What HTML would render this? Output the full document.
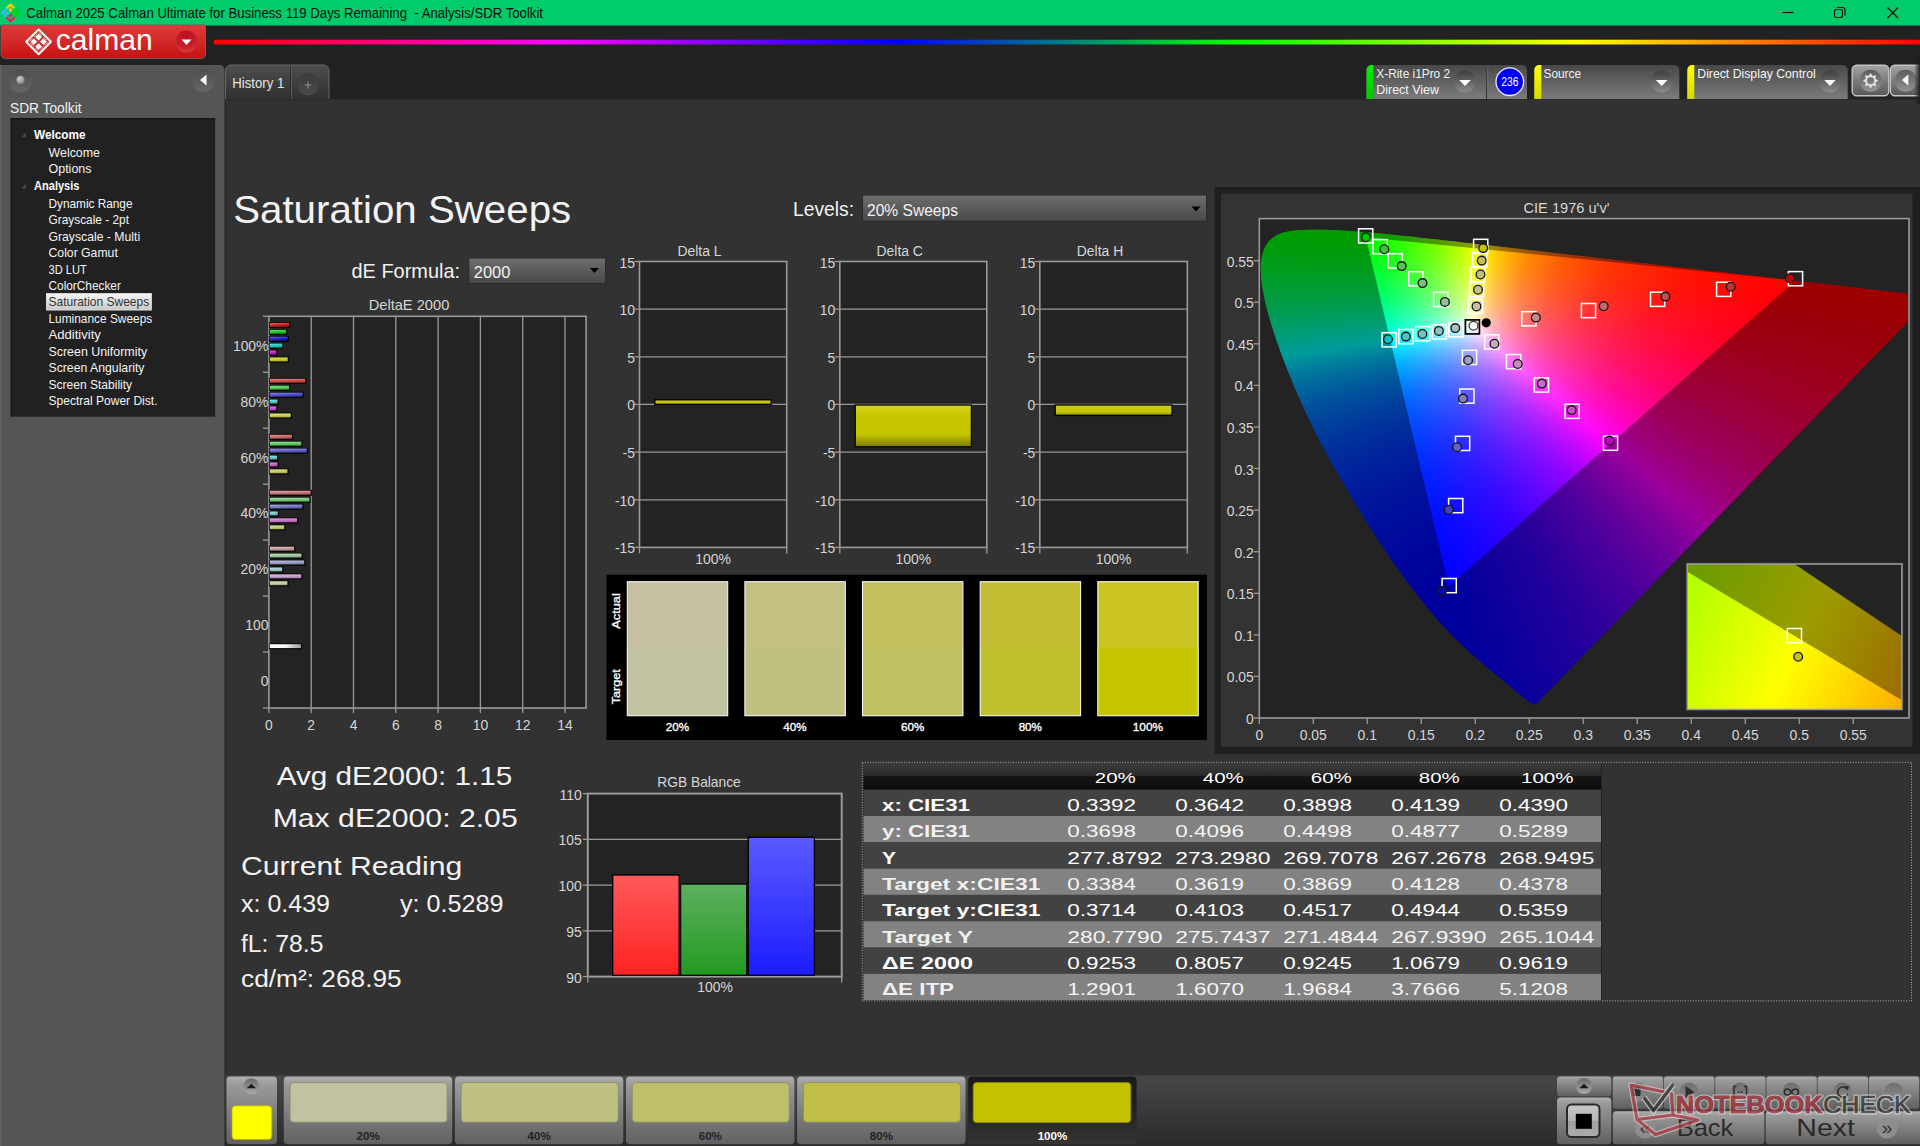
<!DOCTYPE html>
<html><head><meta charset="utf-8"><title>Calman - Saturation Sweeps</title>
<style>
html,body{margin:0;padding:0;background:#222;overflow:hidden}
body{width:1920px;height:1146px;position:relative;font-family:'Liberation Sans', sans-serif}
svg{position:absolute;left:0;top:0;font-family:'Liberation Sans', sans-serif}
svg text{white-space:pre}
#cie i{position:absolute;display:block;height:2px}
</style></head><body>
<svg width="1920" height="1146" viewBox="0 0 1920 1146"><defs>
<linearGradient id="gLogo" x1="0" y1="0" x2="0" y2="1"><stop offset="0" stop-color="#dc3c3c"/><stop offset="0.5" stop-color="#d42828"/><stop offset="1" stop-color="#c41212"/></linearGradient>
<radialGradient id="gLogoBtn" cx="0.5" cy="0.2" r="0.9"><stop offset="0" stop-color="#b80f1e"/><stop offset="0.6" stop-color="#c8202a"/><stop offset="1" stop-color="#de4848"/></radialGradient>
<linearGradient id="gRainbow" x1="0" y1="0" x2="1" y2="0"><stop offset="0" stop-color="#ff0000"/><stop offset="0.2" stop-color="#ff00ff"/><stop offset="0.4" stop-color="#0000ff"/><stop offset="0.6" stop-color="#00ff00"/><stop offset="0.8" stop-color="#ffff00"/><stop offset="1" stop-color="#ff0000"/></linearGradient>
<linearGradient id="gBall" x1="0" y1="0" x2="0" y2="1"><stop offset="0" stop-color="#4e4e4e"/><stop offset="1" stop-color="#666"/></linearGradient>
<radialGradient id="gBall2" cx="0.4" cy="0.35" r="0.7"><stop offset="0" stop-color="#d0d0d0"/><stop offset="1" stop-color="#7a7a7a"/></radialGradient>
<linearGradient id="gShadowV" x1="0" y1="0" x2="0" y2="1"><stop offset="0" stop-color="#111"/><stop offset="1" stop-color="#212121"/></linearGradient>
<linearGradient id="gShadowH" x1="0" y1="0" x2="1" y2="0"><stop offset="0" stop-color="#111"/><stop offset="1" stop-color="#212121" stop-opacity="0"/></linearGradient>
<linearGradient id="gSel" x1="0" y1="0" x2="0" y2="1"><stop offset="0" stop-color="#f6f6f6"/><stop offset="1" stop-color="#c8c8c8"/></linearGradient>
<linearGradient id="gTab" x1="0" y1="0" x2="0" y2="1"><stop offset="0" stop-color="#4e4e4e"/><stop offset="1" stop-color="#303030"/></linearGradient>
<linearGradient id="gPlus" x1="0" y1="0" x2="0" y2="1"><stop offset="0" stop-color="#3a3a3a"/><stop offset="1" stop-color="#4a4a4a"/></linearGradient>
<linearGradient id="gWidget" x1="0" y1="0" x2="0" y2="1"><stop offset="0" stop-color="#484848"/><stop offset="1" stop-color="#7c7c7c"/></linearGradient>
<linearGradient id="gStripeG" x1="0" y1="0" x2="0" y2="1"><stop offset="0" stop-color="#00f000"/><stop offset="1" stop-color="#00c800"/></linearGradient>
<linearGradient id="gStripeY" x1="0" y1="0" x2="0" y2="1"><stop offset="0" stop-color="#ffff00"/><stop offset="1" stop-color="#d8d800"/></linearGradient>
<linearGradient id="gDD" x1="0" y1="0" x2="0" y2="1"><stop offset="0" stop-color="#3e3e3e"/><stop offset="1" stop-color="#8a8a8a"/></linearGradient>
<linearGradient id="gDD4" x1="0" y1="0" x2="0" y2="1"><stop offset="0" stop-color="#5c5c5c"/><stop offset="1" stop-color="#949494"/></linearGradient>
<linearGradient id="gEdge" x1="0" y1="0" x2="1" y2="0"><stop offset="0" stop-color="#222" stop-opacity="0"/><stop offset="1" stop-color="#1a1a1a" stop-opacity="0.95"/></linearGradient>
<linearGradient id="gBtn" x1="0" y1="0" x2="0" y2="1"><stop offset="0" stop-color="#a4a4a4"/><stop offset="0.5" stop-color="#7c7c7c"/><stop offset="1" stop-color="#585858"/></linearGradient>
<linearGradient id="gGloss" x1="0" y1="0" x2="0" y2="1"><stop offset="0" stop-color="#fff" stop-opacity="0.3"/><stop offset="0.45" stop-color="#fff" stop-opacity="0.05"/><stop offset="0.55" stop-color="#000" stop-opacity="0"/><stop offset="1" stop-color="#000" stop-opacity="0.22"/></linearGradient><linearGradient id="gb0" x1="0" y1="0" x2="1" y2="0"><stop offset="0" stop-color="rgb(208,50,50)"/><stop offset="1" stop-color="rgb(200,12,12)"/></linearGradient><linearGradient id="gb1" x1="0" y1="0" x2="1" y2="0"><stop offset="0" stop-color="rgb(50,208,50)"/><stop offset="1" stop-color="rgb(12,200,12)"/></linearGradient><linearGradient id="gb2" x1="0" y1="0" x2="1" y2="0"><stop offset="0" stop-color="rgb(52,52,205)"/><stop offset="1" stop-color="rgb(14,14,196)"/></linearGradient><linearGradient id="gb3" x1="0" y1="0" x2="1" y2="0"><stop offset="0" stop-color="rgb(50,208,208)"/><stop offset="1" stop-color="rgb(12,200,200)"/></linearGradient><linearGradient id="gb4" x1="0" y1="0" x2="1" y2="0"><stop offset="0" stop-color="rgb(208,50,208)"/><stop offset="1" stop-color="rgb(200,12,200)"/></linearGradient><linearGradient id="gb5" x1="0" y1="0" x2="1" y2="0"><stop offset="0" stop-color="rgb(208,208,50)"/><stop offset="1" stop-color="rgb(200,200,12)"/></linearGradient><linearGradient id="gb6" x1="0" y1="0" x2="1" y2="0"><stop offset="0" stop-color="rgb(213,92,92)"/><stop offset="1" stop-color="rgb(205,62,62)"/></linearGradient><linearGradient id="gb7" x1="0" y1="0" x2="1" y2="0"><stop offset="0" stop-color="rgb(92,213,92)"/><stop offset="1" stop-color="rgb(62,205,62)"/></linearGradient><linearGradient id="gb8" x1="0" y1="0" x2="1" y2="0"><stop offset="0" stop-color="rgb(92,92,213)"/><stop offset="1" stop-color="rgb(62,62,205)"/></linearGradient><linearGradient id="gb9" x1="0" y1="0" x2="1" y2="0"><stop offset="0" stop-color="rgb(92,213,213)"/><stop offset="1" stop-color="rgb(62,205,205)"/></linearGradient><linearGradient id="gb10" x1="0" y1="0" x2="1" y2="0"><stop offset="0" stop-color="rgb(213,92,213)"/><stop offset="1" stop-color="rgb(205,62,205)"/></linearGradient><linearGradient id="gb11" x1="0" y1="0" x2="1" y2="0"><stop offset="0" stop-color="rgb(213,213,92)"/><stop offset="1" stop-color="rgb(205,205,62)"/></linearGradient><linearGradient id="gb12" x1="0" y1="0" x2="1" y2="0"><stop offset="0" stop-color="rgb(208,113,113)"/><stop offset="1" stop-color="rgb(200,86,86)"/></linearGradient><linearGradient id="gb13" x1="0" y1="0" x2="1" y2="0"><stop offset="0" stop-color="rgb(113,208,113)"/><stop offset="1" stop-color="rgb(86,200,86)"/></linearGradient><linearGradient id="gb14" x1="0" y1="0" x2="1" y2="0"><stop offset="0" stop-color="rgb(113,113,208)"/><stop offset="1" stop-color="rgb(86,86,200)"/></linearGradient><linearGradient id="gb15" x1="0" y1="0" x2="1" y2="0"><stop offset="0" stop-color="rgb(113,208,208)"/><stop offset="1" stop-color="rgb(86,200,200)"/></linearGradient><linearGradient id="gb16" x1="0" y1="0" x2="1" y2="0"><stop offset="0" stop-color="rgb(208,113,208)"/><stop offset="1" stop-color="rgb(200,86,200)"/></linearGradient><linearGradient id="gb17" x1="0" y1="0" x2="1" y2="0"><stop offset="0" stop-color="rgb(208,208,113)"/><stop offset="1" stop-color="rgb(200,200,86)"/></linearGradient><linearGradient id="gb18" x1="0" y1="0" x2="1" y2="0"><stop offset="0" stop-color="rgb(205,131,131)"/><stop offset="1" stop-color="rgb(196,108,108)"/></linearGradient><linearGradient id="gb19" x1="0" y1="0" x2="1" y2="0"><stop offset="0" stop-color="rgb(131,205,131)"/><stop offset="1" stop-color="rgb(108,196,108)"/></linearGradient><linearGradient id="gb20" x1="0" y1="0" x2="1" y2="0"><stop offset="0" stop-color="rgb(131,131,205)"/><stop offset="1" stop-color="rgb(108,108,196)"/></linearGradient><linearGradient id="gb21" x1="0" y1="0" x2="1" y2="0"><stop offset="0" stop-color="rgb(131,205,205)"/><stop offset="1" stop-color="rgb(108,196,196)"/></linearGradient><linearGradient id="gb22" x1="0" y1="0" x2="1" y2="0"><stop offset="0" stop-color="rgb(205,131,205)"/><stop offset="1" stop-color="rgb(196,108,196)"/></linearGradient><linearGradient id="gb23" x1="0" y1="0" x2="1" y2="0"><stop offset="0" stop-color="rgb(205,205,131)"/><stop offset="1" stop-color="rgb(196,196,108)"/></linearGradient><linearGradient id="gb24" x1="0" y1="0" x2="1" y2="0"><stop offset="0" stop-color="rgb(207,166,166)"/><stop offset="1" stop-color="rgb(198,150,150)"/></linearGradient><linearGradient id="gb25" x1="0" y1="0" x2="1" y2="0"><stop offset="0" stop-color="rgb(166,207,166)"/><stop offset="1" stop-color="rgb(150,198,150)"/></linearGradient><linearGradient id="gb26" x1="0" y1="0" x2="1" y2="0"><stop offset="0" stop-color="rgb(166,166,207)"/><stop offset="1" stop-color="rgb(150,150,198)"/></linearGradient><linearGradient id="gb27" x1="0" y1="0" x2="1" y2="0"><stop offset="0" stop-color="rgb(166,207,207)"/><stop offset="1" stop-color="rgb(150,198,198)"/></linearGradient><linearGradient id="gb28" x1="0" y1="0" x2="1" y2="0"><stop offset="0" stop-color="rgb(207,166,207)"/><stop offset="1" stop-color="rgb(198,150,198)"/></linearGradient><linearGradient id="gb29" x1="0" y1="0" x2="1" y2="0"><stop offset="0" stop-color="rgb(207,207,166)"/><stop offset="1" stop-color="rgb(198,198,150)"/></linearGradient><linearGradient id="gbw" x1="0" y1="0" x2="1" y2="0"><stop offset="0" stop-color="#fff"/><stop offset="0.5" stop-color="#f4f4f4"/><stop offset="1" stop-color="#9c9c9c"/></linearGradient><linearGradient id="gYel" x1="0" y1="0" x2="0" y2="1"><stop offset="0" stop-color="#d6d628"/><stop offset="0.25" stop-color="#c8c800"/><stop offset="0.7" stop-color="#c4c400"/><stop offset="1" stop-color="#7c7c00"/></linearGradient><linearGradient id="gR" x1="0" y1="0" x2="0" y2="1"><stop offset="0" stop-color="#ff5a5a"/><stop offset="1" stop-color="#ff2222"/></linearGradient><linearGradient id="gG" x1="0" y1="0" x2="0" y2="1"><stop offset="0" stop-color="#5eb05e"/><stop offset="1" stop-color="#229a22"/></linearGradient><linearGradient id="gB" x1="0" y1="0" x2="0" y2="1"><stop offset="0" stop-color="#5a5aff"/><stop offset="1" stop-color="#1c1cff"/></linearGradient><linearGradient id="gCombo" x1="0" y1="0" x2="0" y2="1"><stop offset="0" stop-color="#6e6e6e"/><stop offset="1" stop-color="#484848"/></linearGradient><linearGradient id="gTh" x1="0" y1="0" x2="0" y2="1"><stop offset="0" stop-color="#3c3c3c"/><stop offset="0.45" stop-color="#2a2a2a"/><stop offset="0.5" stop-color="#151515"/><stop offset="1" stop-color="#0c0c0c"/></linearGradient><linearGradient id="gBot" x1="0" y1="0" x2="0" y2="1"><stop offset="0" stop-color="#484848"/><stop offset="1" stop-color="#2a2a2a"/></linearGradient><linearGradient id="gBB" x1="0" y1="0" x2="0" y2="1"><stop offset="0" stop-color="#b0b0b0"/><stop offset="0.12" stop-color="#9a9a9a"/><stop offset="1" stop-color="#606060"/></linearGradient><linearGradient id="gSelB" gradientUnits="userSpaceOnUse" x1="0" y1="1076" x2="0" y2="1146"><stop offset="0" stop-color="#1a1a1a"/><stop offset="0.5" stop-color="#222"/><stop offset="1" stop-color="#363636"/></linearGradient><linearGradient id="gStop" x1="0" y1="0" x2="0" y2="1"><stop offset="0" stop-color="#c8c8c8"/><stop offset="0.5" stop-color="#b4b4b4"/><stop offset="0.52" stop-color="#a0a0a0"/><stop offset="1" stop-color="#acacac"/></linearGradient><linearGradient id="gDD3" x1="0" y1="0" x2="0" y2="1"><stop offset="0" stop-color="#6e6e6e"/><stop offset="1" stop-color="#8c8c8c"/></linearGradient><linearGradient id="gDD2" x1="0" y1="0" x2="0" y2="1"><stop offset="0" stop-color="#6a6a6a"/><stop offset="1" stop-color="#aaa"/></linearGradient></defs>
<rect x="0.0" y="0.0" width="1920.0" height="25.5" fill="#00cc6b"/>
<path d="M7,7.9 L10.5,4.5 L14,7.9" fill="none" stroke="#ffc800" stroke-width="2.3" stroke-linecap="round" stroke-linejoin="round"/>
<path d="M10.5,7.800000000000001 L12.6,9.9 L10.5,12.0 L8.4,9.9Z" fill="#ffc800"/>
<path d="M5.8,9.2 L2.5,12.8 L5.8,16.4" fill="none" stroke="#33c0ff" stroke-width="2.3" stroke-linecap="round" stroke-linejoin="round"/>
<path d="M7.3,10.700000000000001 L9.4,12.8 L7.3,14.9 L5.199999999999999,12.8Z" fill="#33c0ff"/>
<path d="M15.2,9.2 L18.5,12.8 L15.2,16.4" fill="none" stroke="#00d800" stroke-width="2.3" stroke-linecap="round" stroke-linejoin="round"/>
<path d="M13.7,10.700000000000001 L15.799999999999999,12.8 L13.7,14.9 L11.6,12.8Z" fill="#00d800"/>
<path d="M7,17.7 L10.5,21.1 L14,17.7" fill="none" stroke="#ff1060" stroke-width="2.3" stroke-linecap="round" stroke-linejoin="round"/>
<path d="M10.5,13.6 L12.6,15.7 L10.5,17.8 L8.4,15.7Z" fill="#ff1060"/>
<text x="26.3" y="17.6" font-size="14.3" fill="#0a0a0a" textLength="516.7" lengthAdjust="spacingAndGlyphs" xml:space="preserve">Calman 2025 Calman Ultimate for Business 119 Days Remaining  - Analysis/SDR Toolkit</text>
<line x1="1782.5" y1="12.5" x2="1793.5" y2="12.5" stroke="#111" stroke-width="1.2"/>
<rect x="1834.5" y="9.5" width="8" height="8" rx="2" fill="none" stroke="#111" stroke-width="1.2"/>
<path d="M1837,7.5 h5.5 a2.5,2.5 0 0 1 2.5,2.5 v5.5" fill="none" stroke="#111" stroke-width="1.2"/>
<path d="M1887.5,7.5 L1898,18 M1898,7.5 L1887.5,18" stroke="#111" stroke-width="1.3" fill="none"/>
<path d="M1,25 H205.5 V54 a4.5,4.5 0 0 1 -4.5,4.5 H5.5 a4.5,4.5 0 0 1 -4.5,-4.5Z" fill="url(#gLogo)" stroke="#7a5a5a" stroke-width="1"/>
<path d="M38.60,29.40 L51.00,41.80 L38.60,54.20 L26.20,41.80Z" fill="none" stroke="#fff" stroke-width="2" stroke-linejoin="round"/>
<path d="M38.60,33.80 L41.90,37.10 L38.60,40.40 L35.30,37.10Z M33.90,38.50 L37.20,41.80 L33.90,45.10 L30.60,41.80Z M43.30,38.50 L46.60,41.80 L43.30,45.10 L40.00,41.80Z M38.60,43.20 L41.90,46.50 L38.60,49.80 L35.30,46.50Z" fill="#fff"/>
<path d="M29.3,41.8 L38.6,32.5 L47.900000000000006,41.8 L38.6,51.099999999999994Z" fill="none" stroke="#fff" stroke-width="1" stroke-opacity="0.75" stroke-dasharray="4.6 2"/>
<text x="55.7" y="50.1" font-size="29.5" fill="#fff" textLength="97.0" lengthAdjust="spacingAndGlyphs">calman</text>
<circle cx="186.5" cy="41.5" r="11" fill="url(#gLogoBtn)"/>
<path d="M181.5,39.5 h10 l-5,5.5Z" fill="#fff"/>
<rect x="214.0" y="39.7" width="1706.0" height="4.8" fill="url(#gRainbow)"/>
<path d="M0,65 H219.5 a5,5 0 0 1 5,5 V1146 H0Z" fill="#555"/>
<rect x="0.0" y="65.0" width="1.5" height="1081.0" fill="#626262"/>
<circle cx="20.5" cy="81" r="11.5" fill="url(#gBall)"/>
<circle cx="20.5" cy="80" r="4.2" fill="url(#gBall2)"/>
<circle cx="203.5" cy="80.5" r="11.5" fill="url(#gBall)"/>
<path d="M206.5,74.5 v11 l-6.5,-5.5Z" fill="#fff"/>
<text x="10.0" y="113.3" font-size="14.6" fill="#f0f0f0" textLength="71.5" lengthAdjust="spacingAndGlyphs">SDR Toolkit</text>
<rect x="10.7" y="118.0" width="204.5" height="298.7" fill="#212121"/>
<rect x="10.7" y="118.0" width="204.5" height="2.5" fill="url(#gShadowV)"/>
<rect x="10.7" y="118.0" width="2.5" height="298.7" fill="url(#gShadowH)"/>
<text x="34.0" y="138.5" font-size="12.6" fill="#fff" textLength="51.5" lengthAdjust="spacingAndGlyphs" font-weight="bold">Welcome</text>
<path d="M25.8,132.7 v4.6 h-4.6Z" fill="#4a4a4a"/>
<text x="48.5" y="156.6" font-size="12.6" fill="#f4f4f4" textLength="51.5" lengthAdjust="spacingAndGlyphs">Welcome</text>
<text x="48.5" y="173.1" font-size="12.6" fill="#f4f4f4" textLength="43.0" lengthAdjust="spacingAndGlyphs">Options</text>
<text x="34.0" y="189.6" font-size="12.6" fill="#fff" textLength="45.5" lengthAdjust="spacingAndGlyphs" font-weight="bold">Analysis</text>
<path d="M25.8,183.79999999999998 v4.6 h-4.6Z" fill="#4a4a4a"/>
<text x="48.5" y="207.6" font-size="12.6" fill="#f4f4f4" textLength="84.0" lengthAdjust="spacingAndGlyphs">Dynamic Range</text>
<text x="48.5" y="224.1" font-size="12.6" fill="#f4f4f4" textLength="80.5" lengthAdjust="spacingAndGlyphs">Grayscale - 2pt</text>
<text x="48.5" y="240.6" font-size="12.6" fill="#f4f4f4" textLength="91.6" lengthAdjust="spacingAndGlyphs">Grayscale - Multi</text>
<text x="48.5" y="257.1" font-size="12.6" fill="#f4f4f4" textLength="69.3" lengthAdjust="spacingAndGlyphs">Color Gamut</text>
<text x="48.5" y="273.5" font-size="12.6" fill="#f4f4f4" textLength="38.2" lengthAdjust="spacingAndGlyphs">3D LUT</text>
<text x="48.5" y="290.0" font-size="12.6" fill="#f4f4f4" textLength="72.4" lengthAdjust="spacingAndGlyphs">ColorChecker</text>
<rect x="46.3" y="293.5" width="105.2" height="16.6" fill="url(#gSel)" stroke="#fff" stroke-width="0.6"/>
<text x="48.5" y="306.4" font-size="12.6" fill="#333" textLength="100.7" lengthAdjust="spacingAndGlyphs">Saturation Sweeps</text>
<text x="48.5" y="322.9" font-size="12.6" fill="#f4f4f4" textLength="103.7" lengthAdjust="spacingAndGlyphs">Luminance Sweeps</text>
<text x="48.5" y="339.3" font-size="12.6" fill="#f4f4f4" textLength="52.4" lengthAdjust="spacingAndGlyphs">Additivity</text>
<text x="48.5" y="355.8" font-size="12.6" fill="#f4f4f4" textLength="98.6" lengthAdjust="spacingAndGlyphs">Screen Uniformity</text>
<text x="48.5" y="372.2" font-size="12.6" fill="#f4f4f4" textLength="96.0" lengthAdjust="spacingAndGlyphs">Screen Angularity</text>
<text x="48.5" y="388.6" font-size="12.6" fill="#f4f4f4" textLength="83.6" lengthAdjust="spacingAndGlyphs">Screen Stability</text>
<text x="48.5" y="405.0" font-size="12.6" fill="#f4f4f4" textLength="109.0" lengthAdjust="spacingAndGlyphs">Spectral Power Dist.</text>
<rect x="225.5" y="99.5" width="1695.0" height="1047.0" fill="#323232"/>
<path d="M225.5,99.5 V70.5 a5.5,5.5 0 0 1 5.5,-5.5 H323.5 a5.5,5.5 0 0 1 5.5,5.5 V99.5Z" fill="url(#gTab)" stroke="#666" stroke-width="1"/>
<line x1="225.0" y1="99.6" x2="330.0" y2="99.6" stroke="#2a2a2a" stroke-width="1.2"/>
<line x1="290.5" y1="66.0" x2="290.5" y2="99.0" stroke="#2a2a2a" stroke-width="1"/>
<line x1="291.5" y1="66.0" x2="291.5" y2="99.0" stroke="#5a5a5a" stroke-width="1"/>
<text x="232.3" y="88.0" font-size="14.8" fill="#e4e4e4" textLength="52.0" lengthAdjust="spacingAndGlyphs">History 1</text>
<circle cx="308" cy="84.3" r="11" fill="url(#gPlus)"/>
<path d="M304.5,85 h7 M308,81.5 v7" stroke="#999" stroke-width="0.9"/>
<path d="M1366.5,99 V70 a5,5 0 0 1 5,-5 H1522 a5,5 0 0 1 5,5 V99Z" fill="url(#gWidget)"/><path d="M1366.5,99 V70 a5,5 0 0 1 5,-5 H1373.5 V99Z" fill="url(#gStripeG)"/>
<text x="1376.3" y="77.9" font-size="12.6" fill="#f4f4f4" textLength="73.8" lengthAdjust="spacingAndGlyphs">X-Rite i1Pro 2</text>
<text x="1376.3" y="94.4" font-size="12.6" fill="#f4f4f4" textLength="62.7" lengthAdjust="spacingAndGlyphs">Direct View</text>
<circle cx="1465" cy="81.5" r="11" fill="url(#gDD)"/><path d="M1459.2,80.0 h11.6 l-5.8,6Z" fill="#fff"/>
<line x1="1486.6" y1="68.0" x2="1486.6" y2="99.0" stroke="#3c3c3c" stroke-width="1.2"/>
<line x1="1487.8" y1="68.0" x2="1487.8" y2="99.0" stroke="#777" stroke-width="0.8"/>
<circle cx="1509.8" cy="81.7" r="13.8" fill="#0000f0" stroke="#e8e8ff" stroke-width="1.3"/>
<text x="1509.8" y="86.3" font-size="12.4" fill="#fff" textLength="17.2" lengthAdjust="spacingAndGlyphs" text-anchor="middle">236</text>
<path d="M1534.3,99 V70 a5,5 0 0 1 5,-5 H1674.3 a5,5 0 0 1 5,5 V99Z" fill="url(#gWidget)"/><path d="M1534.3,99 V70 a5,5 0 0 1 5,-5 H1541.3 V99Z" fill="url(#gStripeY)"/>
<text x="1543.5" y="77.9" font-size="12.6" fill="#f4f4f4" textLength="37.5" lengthAdjust="spacingAndGlyphs">Source</text>
<circle cx="1661.7" cy="81.5" r="11" fill="url(#gDD)"/><path d="M1655.9,80.0 h11.6 l-5.8,6Z" fill="#fff"/>
<path d="M1687.3,99 V70 a5,5 0 0 1 5,-5 H1842.7 a5,5 0 0 1 5,5 V99Z" fill="url(#gWidget)"/><path d="M1687.3,99 V70 a5,5 0 0 1 5,-5 H1694.3 V99Z" fill="url(#gStripeY)"/>
<text x="1697.3" y="77.9" font-size="12.6" fill="#f4f4f4" textLength="118.4" lengthAdjust="spacingAndGlyphs">Direct Display Control</text>
<circle cx="1830" cy="81.5" r="11" fill="url(#gDD)"/><path d="M1824.2,80.0 h11.6 l-5.8,6Z" fill="#fff"/>
<rect x="1852.2" y="65.3" width="36.6" height="30.4" rx="4.5" fill="url(#gBtn)" stroke="#c4c4c4" stroke-width="1.4"/>
<rect x="1890.4" y="65.3" width="40" height="30.4" rx="4.5" fill="url(#gBtn)" stroke="#c4c4c4" stroke-width="1.4"/>
<circle cx="1870.6" cy="80.7" r="11" fill="url(#gDD4)"/>
<path d="M1870.60,73.20 L1872.51,76.08 L1875.90,75.40 L1875.22,78.79 L1878.10,80.70 L1875.22,82.61 L1875.90,86.00 L1872.51,85.32 L1870.60,88.20 L1868.69,85.32 L1865.30,86.00 L1865.98,82.61 L1863.10,80.70 L1865.98,78.79 L1865.30,75.40 L1868.69,76.08Z M1874.4,80.7 a3.8,3.8 0 1 0 -7.6,0 a3.8,3.8 0 1 0 7.6,0Z" fill="#e6e6e6" fill-rule="evenodd" stroke="#e6e6e6" stroke-width="0.3" stroke-linejoin="round"/>
<circle cx="1905.6" cy="80.7" r="11" fill="url(#gDD4)"/>
<path d="M1908.3,74.5 v11 l-6.3,-5.5Z" fill="#fff"/>
<rect x="1914.0" y="58.0" width="6.0" height="46.0" fill="url(#gEdge)"/>
<text x="233.2" y="223.3" font-size="39.5" fill="#f2f2f2" textLength="338.0" lengthAdjust="spacingAndGlyphs">Saturation Sweeps</text>
<text x="793.0" y="216.0" font-size="21" fill="#f2f2f2" textLength="61.0" lengthAdjust="spacingAndGlyphs">Levels:</text>
<rect x="862.5" y="195.0" width="344.0" height="26.3" fill="url(#gCombo)" stroke="#2a2a2a" stroke-width="1"/>
<text x="867.0" y="215.8" font-size="16.3" fill="#f2f2f2" textLength="91.0" lengthAdjust="spacingAndGlyphs">20% Sweeps</text>
<path d="M1191.5,206.5 h9 l-4.5,5Z" fill="#000"/>
<text x="351.5" y="278.0" font-size="21" fill="#f2f2f2" textLength="108.5" lengthAdjust="spacingAndGlyphs">dE Formula:</text>
<rect x="468.8" y="258.0" width="136.8" height="25.6" fill="url(#gCombo)" stroke="#2a2a2a" stroke-width="1"/>
<text x="473.8" y="277.8" font-size="16.3" fill="#f2f2f2" textLength="36.5" lengthAdjust="spacingAndGlyphs">2000</text>
<path d="M590,268 h9 l-4.5,5Z" fill="#000"/>
<text x="409.0" y="310.2" font-size="14.5" fill="#d6d6d6" textLength="80.6" lengthAdjust="spacingAndGlyphs" text-anchor="middle">DeltaE 2000</text>
<rect x="268.9" y="316.3" width="317.2" height="391.7" fill="#232323" stroke="#9a9a9a" stroke-width="1.6"/>
<line x1="311.2" y1="316.3" x2="311.2" y2="708.0" stroke="#9a9a9a" stroke-width="1.3"/>
<line x1="353.5" y1="316.3" x2="353.5" y2="708.0" stroke="#9a9a9a" stroke-width="1.3"/>
<line x1="395.8" y1="316.3" x2="395.8" y2="708.0" stroke="#9a9a9a" stroke-width="1.3"/>
<line x1="438.1" y1="316.3" x2="438.1" y2="708.0" stroke="#9a9a9a" stroke-width="1.3"/>
<line x1="480.4" y1="316.3" x2="480.4" y2="708.0" stroke="#9a9a9a" stroke-width="1.3"/>
<line x1="522.7" y1="316.3" x2="522.7" y2="708.0" stroke="#9a9a9a" stroke-width="1.3"/>
<line x1="565.0" y1="316.3" x2="565.0" y2="708.0" stroke="#9a9a9a" stroke-width="1.3"/>
<line x1="268.9" y1="708.0" x2="268.9" y2="713.0" stroke="#9a9a9a" stroke-width="1.3"/>
<text x="268.9" y="730.3" font-size="15.3" fill="#d6d6d6" textLength="7.7" lengthAdjust="spacingAndGlyphs" text-anchor="middle">0</text>
<line x1="311.2" y1="708.0" x2="311.2" y2="713.0" stroke="#9a9a9a" stroke-width="1.3"/>
<text x="311.2" y="730.3" font-size="15.3" fill="#d6d6d6" textLength="7.7" lengthAdjust="spacingAndGlyphs" text-anchor="middle">2</text>
<line x1="353.5" y1="708.0" x2="353.5" y2="713.0" stroke="#9a9a9a" stroke-width="1.3"/>
<text x="353.5" y="730.3" font-size="15.3" fill="#d6d6d6" textLength="7.7" lengthAdjust="spacingAndGlyphs" text-anchor="middle">4</text>
<line x1="395.8" y1="708.0" x2="395.8" y2="713.0" stroke="#9a9a9a" stroke-width="1.3"/>
<text x="395.8" y="730.3" font-size="15.3" fill="#d6d6d6" textLength="7.7" lengthAdjust="spacingAndGlyphs" text-anchor="middle">6</text>
<line x1="438.1" y1="708.0" x2="438.1" y2="713.0" stroke="#9a9a9a" stroke-width="1.3"/>
<text x="438.1" y="730.3" font-size="15.3" fill="#d6d6d6" textLength="7.7" lengthAdjust="spacingAndGlyphs" text-anchor="middle">8</text>
<line x1="480.4" y1="708.0" x2="480.4" y2="713.0" stroke="#9a9a9a" stroke-width="1.3"/>
<text x="480.4" y="730.3" font-size="15.3" fill="#d6d6d6" textLength="15.5" lengthAdjust="spacingAndGlyphs" text-anchor="middle">10</text>
<line x1="522.7" y1="708.0" x2="522.7" y2="713.0" stroke="#9a9a9a" stroke-width="1.3"/>
<text x="522.7" y="730.3" font-size="15.3" fill="#d6d6d6" textLength="15.5" lengthAdjust="spacingAndGlyphs" text-anchor="middle">12</text>
<line x1="565.0" y1="708.0" x2="565.0" y2="713.0" stroke="#9a9a9a" stroke-width="1.3"/>
<text x="565.0" y="730.3" font-size="15.3" fill="#d6d6d6" textLength="15.5" lengthAdjust="spacingAndGlyphs" text-anchor="middle">14</text>
<line x1="262.9" y1="316.3" x2="268.9" y2="316.3" stroke="#9a9a9a" stroke-width="1.3"/>
<text x="268.5" y="350.6" font-size="15.3" fill="#d6d6d6" textLength="35.6" lengthAdjust="spacingAndGlyphs" text-anchor="end">100%</text>
<line x1="262.9" y1="372.3" x2="268.9" y2="372.3" stroke="#9a9a9a" stroke-width="1.3"/>
<text x="268.5" y="406.5" font-size="15.3" fill="#d6d6d6" textLength="27.9" lengthAdjust="spacingAndGlyphs" text-anchor="end">80%</text>
<line x1="262.9" y1="428.2" x2="268.9" y2="428.2" stroke="#9a9a9a" stroke-width="1.3"/>
<text x="268.5" y="462.5" font-size="15.3" fill="#d6d6d6" textLength="27.9" lengthAdjust="spacingAndGlyphs" text-anchor="end">60%</text>
<line x1="262.9" y1="484.2" x2="268.9" y2="484.2" stroke="#9a9a9a" stroke-width="1.3"/>
<text x="268.5" y="518.4" font-size="15.3" fill="#d6d6d6" textLength="27.9" lengthAdjust="spacingAndGlyphs" text-anchor="end">40%</text>
<line x1="262.9" y1="540.1" x2="268.9" y2="540.1" stroke="#9a9a9a" stroke-width="1.3"/>
<text x="268.5" y="574.4" font-size="15.3" fill="#d6d6d6" textLength="27.9" lengthAdjust="spacingAndGlyphs" text-anchor="end">20%</text>
<line x1="262.9" y1="596.1" x2="268.9" y2="596.1" stroke="#9a9a9a" stroke-width="1.3"/>
<text x="268.5" y="630.4" font-size="15.3" fill="#d6d6d6" textLength="23.2" lengthAdjust="spacingAndGlyphs" text-anchor="end">100</text>
<line x1="262.9" y1="652.0" x2="268.9" y2="652.0" stroke="#9a9a9a" stroke-width="1.3"/>
<text x="268.5" y="686.3" font-size="15.3" fill="#d6d6d6" textLength="7.7" lengthAdjust="spacingAndGlyphs" text-anchor="end">0</text>
<line x1="262.9" y1="708.0" x2="268.9" y2="708.0" stroke="#9a9a9a" stroke-width="1.3"/>
<rect x="268.9" y="322.0" width="21.6" height="5.9" fill="#000"/><rect x="269.7" y="322.9" width="19.6" height="3.9" fill="url(#gb0)"/><rect x="269.7" y="322.9" width="19.6" height="3.9" fill="url(#gGloss)"/>
<rect x="268.9" y="328.9" width="18.4" height="5.9" fill="#000"/><rect x="269.7" y="329.8" width="16.4" height="3.9" fill="url(#gb1)"/><rect x="269.7" y="329.8" width="16.4" height="3.9" fill="url(#gGloss)"/>
<rect x="268.9" y="335.9" width="19.9" height="5.9" fill="#000"/><rect x="269.7" y="336.7" width="17.9" height="3.9" fill="url(#gb2)"/><rect x="269.7" y="336.7" width="17.9" height="3.9" fill="url(#gGloss)"/>
<rect x="268.9" y="342.8" width="14.6" height="5.9" fill="#000"/><rect x="269.7" y="343.6" width="12.6" height="3.9" fill="url(#gb3)"/><rect x="269.7" y="343.6" width="12.6" height="3.9" fill="url(#gGloss)"/>
<rect x="268.9" y="349.7" width="8.5" height="5.9" fill="#000"/><rect x="269.7" y="350.6" width="6.5" height="3.9" fill="url(#gb4)"/><rect x="269.7" y="350.6" width="6.5" height="3.9" fill="url(#gGloss)"/>
<rect x="268.9" y="356.7" width="20.0" height="5.9" fill="#000"/><rect x="269.7" y="357.5" width="18.0" height="3.9" fill="url(#gb5)"/><rect x="269.7" y="357.5" width="18.0" height="3.9" fill="url(#gGloss)"/>
<rect x="268.9" y="378.0" width="37.6" height="5.9" fill="#000"/><rect x="269.7" y="378.8" width="35.6" height="3.9" fill="url(#gb6)"/><rect x="269.7" y="378.8" width="35.6" height="3.9" fill="url(#gGloss)"/>
<rect x="268.9" y="384.9" width="21.4" height="5.9" fill="#000"/><rect x="269.7" y="385.7" width="19.4" height="3.9" fill="url(#gb7)"/><rect x="269.7" y="385.7" width="19.4" height="3.9" fill="url(#gGloss)"/>
<rect x="268.9" y="391.8" width="34.9" height="5.9" fill="#000"/><rect x="269.7" y="392.7" width="32.9" height="3.9" fill="url(#gb8)"/><rect x="269.7" y="392.7" width="32.9" height="3.9" fill="url(#gGloss)"/>
<rect x="268.9" y="398.7" width="9.8" height="5.9" fill="#000"/><rect x="269.7" y="399.6" width="7.8" height="3.9" fill="url(#gb9)"/><rect x="269.7" y="399.6" width="7.8" height="3.9" fill="url(#gGloss)"/>
<rect x="268.9" y="405.7" width="8.6" height="5.9" fill="#000"/><rect x="269.7" y="406.5" width="6.6" height="3.9" fill="url(#gb10)"/><rect x="269.7" y="406.5" width="6.6" height="3.9" fill="url(#gGloss)"/>
<rect x="268.9" y="412.6" width="23.0" height="5.9" fill="#000"/><rect x="269.7" y="413.5" width="21.0" height="3.9" fill="url(#gb11)"/><rect x="269.7" y="413.5" width="21.0" height="3.9" fill="url(#gGloss)"/>
<rect x="268.9" y="433.9" width="24.2" height="5.9" fill="#000"/><rect x="269.7" y="434.8" width="22.2" height="3.9" fill="url(#gb12)"/><rect x="269.7" y="434.8" width="22.2" height="3.9" fill="url(#gGloss)"/>
<rect x="268.9" y="440.8" width="33.6" height="5.9" fill="#000"/><rect x="269.7" y="441.7" width="31.6" height="3.9" fill="url(#gb13)"/><rect x="269.7" y="441.7" width="31.6" height="3.9" fill="url(#gGloss)"/>
<rect x="268.9" y="447.8" width="39.2" height="5.9" fill="#000"/><rect x="269.7" y="448.6" width="37.2" height="3.9" fill="url(#gb14)"/><rect x="269.7" y="448.6" width="37.2" height="3.9" fill="url(#gGloss)"/>
<rect x="268.9" y="454.7" width="9.4" height="5.9" fill="#000"/><rect x="269.7" y="455.6" width="7.4" height="3.9" fill="url(#gb15)"/><rect x="269.7" y="455.6" width="7.4" height="3.9" fill="url(#gGloss)"/>
<rect x="268.9" y="461.6" width="9.8" height="5.9" fill="#000"/><rect x="269.7" y="462.5" width="7.8" height="3.9" fill="url(#gb16)"/><rect x="269.7" y="462.5" width="7.8" height="3.9" fill="url(#gGloss)"/>
<rect x="268.9" y="468.6" width="19.7" height="5.9" fill="#000"/><rect x="269.7" y="469.4" width="17.7" height="3.9" fill="url(#gb17)"/><rect x="269.7" y="469.4" width="17.7" height="3.9" fill="url(#gGloss)"/>
<rect x="268.9" y="489.9" width="43.0" height="5.9" fill="#000"/><rect x="269.7" y="490.7" width="41.0" height="3.9" fill="url(#gb18)"/><rect x="269.7" y="490.7" width="41.0" height="3.9" fill="url(#gGloss)"/>
<rect x="268.9" y="496.8" width="41.7" height="5.9" fill="#000"/><rect x="269.7" y="497.7" width="39.7" height="3.9" fill="url(#gb19)"/><rect x="269.7" y="497.7" width="39.7" height="3.9" fill="url(#gGloss)"/>
<rect x="268.9" y="503.7" width="34.6" height="5.9" fill="#000"/><rect x="269.7" y="504.6" width="32.6" height="3.9" fill="url(#gb20)"/><rect x="269.7" y="504.6" width="32.6" height="3.9" fill="url(#gGloss)"/>
<rect x="268.9" y="510.7" width="10.0" height="5.9" fill="#000"/><rect x="269.7" y="511.5" width="8.0" height="3.9" fill="url(#gb21)"/><rect x="269.7" y="511.5" width="8.0" height="3.9" fill="url(#gGloss)"/>
<rect x="268.9" y="517.6" width="29.4" height="5.9" fill="#000"/><rect x="269.7" y="518.4" width="27.4" height="3.9" fill="url(#gb22)"/><rect x="269.7" y="518.4" width="27.4" height="3.9" fill="url(#gGloss)"/>
<rect x="268.9" y="524.5" width="16.6" height="5.9" fill="#000"/><rect x="269.7" y="525.4" width="14.6" height="3.9" fill="url(#gb23)"/><rect x="269.7" y="525.4" width="14.6" height="3.9" fill="url(#gGloss)"/>
<rect x="268.9" y="545.8" width="26.4" height="5.9" fill="#000"/><rect x="269.7" y="546.7" width="24.4" height="3.9" fill="url(#gb24)"/><rect x="269.7" y="546.7" width="24.4" height="3.9" fill="url(#gGloss)"/>
<rect x="268.9" y="552.8" width="33.8" height="5.9" fill="#000"/><rect x="269.7" y="553.6" width="31.8" height="3.9" fill="url(#gb25)"/><rect x="269.7" y="553.6" width="31.8" height="3.9" fill="url(#gGloss)"/>
<rect x="268.9" y="559.7" width="36.5" height="5.9" fill="#000"/><rect x="269.7" y="560.5" width="34.5" height="3.9" fill="url(#gb26)"/><rect x="269.7" y="560.5" width="34.5" height="3.9" fill="url(#gGloss)"/>
<rect x="268.9" y="566.6" width="14.5" height="5.9" fill="#000"/><rect x="269.7" y="567.5" width="12.5" height="3.9" fill="url(#gb27)"/><rect x="269.7" y="567.5" width="12.5" height="3.9" fill="url(#gGloss)"/>
<rect x="268.9" y="573.5" width="33.6" height="5.9" fill="#000"/><rect x="269.7" y="574.4" width="31.6" height="3.9" fill="url(#gb28)"/><rect x="269.7" y="574.4" width="31.6" height="3.9" fill="url(#gGloss)"/>
<rect x="268.9" y="580.5" width="19.7" height="5.9" fill="#000"/><rect x="269.7" y="581.3" width="17.7" height="3.9" fill="url(#gb29)"/><rect x="269.7" y="581.3" width="17.7" height="3.9" fill="url(#gGloss)"/>
<rect x="268.9" y="643.4" width="33.2" height="5.9" fill="#000"/>
<rect x="269.7" y="644.2" width="31.2" height="3.9" fill="url(#gbw)"/>
<rect x="639.5" y="261.5" width="147.2" height="285.9" fill="#232323" stroke="#9a9a9a" stroke-width="1.6"/>
<line x1="639.5" y1="309.1" x2="786.7" y2="309.1" stroke="#9a9a9a" stroke-width="1.3"/>
<line x1="639.5" y1="356.8" x2="786.7" y2="356.8" stroke="#9a9a9a" stroke-width="1.3"/>
<line x1="639.5" y1="404.4" x2="786.7" y2="404.4" stroke="#9a9a9a" stroke-width="1.3"/>
<line x1="639.5" y1="452.1" x2="786.7" y2="452.1" stroke="#9a9a9a" stroke-width="1.3"/>
<line x1="639.5" y1="499.8" x2="786.7" y2="499.8" stroke="#9a9a9a" stroke-width="1.3"/>
<line x1="634.5" y1="261.5" x2="639.5" y2="261.5" stroke="#9a9a9a" stroke-width="1.3"/>
<text x="635.0" y="267.5" font-size="15.3" fill="#d6d6d6" textLength="15.5" lengthAdjust="spacingAndGlyphs" text-anchor="end">15</text>
<line x1="634.5" y1="309.1" x2="639.5" y2="309.1" stroke="#9a9a9a" stroke-width="1.3"/>
<text x="635.0" y="315.1" font-size="15.3" fill="#d6d6d6" textLength="15.5" lengthAdjust="spacingAndGlyphs" text-anchor="end">10</text>
<line x1="634.5" y1="356.8" x2="639.5" y2="356.8" stroke="#9a9a9a" stroke-width="1.3"/>
<text x="635.0" y="362.8" font-size="15.3" fill="#d6d6d6" textLength="7.7" lengthAdjust="spacingAndGlyphs" text-anchor="end">5</text>
<line x1="634.5" y1="404.4" x2="639.5" y2="404.4" stroke="#9a9a9a" stroke-width="1.3"/>
<text x="635.0" y="410.4" font-size="15.3" fill="#d6d6d6" textLength="7.7" lengthAdjust="spacingAndGlyphs" text-anchor="end">0</text>
<line x1="634.5" y1="452.1" x2="639.5" y2="452.1" stroke="#9a9a9a" stroke-width="1.3"/>
<text x="635.0" y="458.1" font-size="15.3" fill="#d6d6d6" textLength="12.4" lengthAdjust="spacingAndGlyphs" text-anchor="end">-5</text>
<line x1="634.5" y1="499.8" x2="639.5" y2="499.8" stroke="#9a9a9a" stroke-width="1.3"/>
<text x="635.0" y="505.8" font-size="15.3" fill="#d6d6d6" textLength="20.1" lengthAdjust="spacingAndGlyphs" text-anchor="end">-10</text>
<line x1="634.5" y1="547.4" x2="639.5" y2="547.4" stroke="#9a9a9a" stroke-width="1.3"/>
<text x="635.0" y="553.4" font-size="15.3" fill="#d6d6d6" textLength="20.1" lengthAdjust="spacingAndGlyphs" text-anchor="end">-15</text>
<line x1="639.5" y1="547.4" x2="639.5" y2="553.4" stroke="#9a9a9a" stroke-width="1.3"/>
<line x1="786.7" y1="547.4" x2="786.7" y2="553.4" stroke="#9a9a9a" stroke-width="1.3"/>
<text x="699.5" y="256.0" font-size="15.3" fill="#d6d6d6" textLength="44.1" lengthAdjust="spacingAndGlyphs" text-anchor="middle">Delta L</text>
<text x="713.1" y="564.3" font-size="15.3" fill="#d6d6d6" textLength="35.6" lengthAdjust="spacingAndGlyphs" text-anchor="middle">100%</text>
<rect x="654.8" y="399.8" width="116.4" height="4.6" fill="url(#gYel)" stroke="#000" stroke-width="1.3"/>
<rect x="839.8" y="261.5" width="147.0" height="285.9" fill="#232323" stroke="#9a9a9a" stroke-width="1.6"/>
<line x1="839.8" y1="309.1" x2="986.8" y2="309.1" stroke="#9a9a9a" stroke-width="1.3"/>
<line x1="839.8" y1="356.8" x2="986.8" y2="356.8" stroke="#9a9a9a" stroke-width="1.3"/>
<line x1="839.8" y1="404.4" x2="986.8" y2="404.4" stroke="#9a9a9a" stroke-width="1.3"/>
<line x1="839.8" y1="452.1" x2="986.8" y2="452.1" stroke="#9a9a9a" stroke-width="1.3"/>
<line x1="839.8" y1="499.8" x2="986.8" y2="499.8" stroke="#9a9a9a" stroke-width="1.3"/>
<line x1="834.8" y1="261.5" x2="839.8" y2="261.5" stroke="#9a9a9a" stroke-width="1.3"/>
<text x="835.3" y="267.5" font-size="15.3" fill="#d6d6d6" textLength="15.5" lengthAdjust="spacingAndGlyphs" text-anchor="end">15</text>
<line x1="834.8" y1="309.1" x2="839.8" y2="309.1" stroke="#9a9a9a" stroke-width="1.3"/>
<text x="835.3" y="315.1" font-size="15.3" fill="#d6d6d6" textLength="15.5" lengthAdjust="spacingAndGlyphs" text-anchor="end">10</text>
<line x1="834.8" y1="356.8" x2="839.8" y2="356.8" stroke="#9a9a9a" stroke-width="1.3"/>
<text x="835.3" y="362.8" font-size="15.3" fill="#d6d6d6" textLength="7.7" lengthAdjust="spacingAndGlyphs" text-anchor="end">5</text>
<line x1="834.8" y1="404.4" x2="839.8" y2="404.4" stroke="#9a9a9a" stroke-width="1.3"/>
<text x="835.3" y="410.4" font-size="15.3" fill="#d6d6d6" textLength="7.7" lengthAdjust="spacingAndGlyphs" text-anchor="end">0</text>
<line x1="834.8" y1="452.1" x2="839.8" y2="452.1" stroke="#9a9a9a" stroke-width="1.3"/>
<text x="835.3" y="458.1" font-size="15.3" fill="#d6d6d6" textLength="12.4" lengthAdjust="spacingAndGlyphs" text-anchor="end">-5</text>
<line x1="834.8" y1="499.8" x2="839.8" y2="499.8" stroke="#9a9a9a" stroke-width="1.3"/>
<text x="835.3" y="505.8" font-size="15.3" fill="#d6d6d6" textLength="20.1" lengthAdjust="spacingAndGlyphs" text-anchor="end">-10</text>
<line x1="834.8" y1="547.4" x2="839.8" y2="547.4" stroke="#9a9a9a" stroke-width="1.3"/>
<text x="835.3" y="553.4" font-size="15.3" fill="#d6d6d6" textLength="20.1" lengthAdjust="spacingAndGlyphs" text-anchor="end">-15</text>
<line x1="839.8" y1="547.4" x2="839.8" y2="553.4" stroke="#9a9a9a" stroke-width="1.3"/>
<line x1="986.8" y1="547.4" x2="986.8" y2="553.4" stroke="#9a9a9a" stroke-width="1.3"/>
<text x="899.7" y="256.0" font-size="15.3" fill="#d6d6d6" textLength="46.4" lengthAdjust="spacingAndGlyphs" text-anchor="middle">Delta C</text>
<text x="913.3" y="564.3" font-size="15.3" fill="#d6d6d6" textLength="35.6" lengthAdjust="spacingAndGlyphs" text-anchor="middle">100%</text>
<rect x="855.2" y="405" width="116.2" height="41.8" fill="url(#gYel)" stroke="#000" stroke-width="1.3"/>
<rect x="1039.8" y="261.5" width="147.5" height="285.9" fill="#232323" stroke="#9a9a9a" stroke-width="1.6"/>
<line x1="1039.8" y1="309.1" x2="1187.3" y2="309.1" stroke="#9a9a9a" stroke-width="1.3"/>
<line x1="1039.8" y1="356.8" x2="1187.3" y2="356.8" stroke="#9a9a9a" stroke-width="1.3"/>
<line x1="1039.8" y1="404.4" x2="1187.3" y2="404.4" stroke="#9a9a9a" stroke-width="1.3"/>
<line x1="1039.8" y1="452.1" x2="1187.3" y2="452.1" stroke="#9a9a9a" stroke-width="1.3"/>
<line x1="1039.8" y1="499.8" x2="1187.3" y2="499.8" stroke="#9a9a9a" stroke-width="1.3"/>
<line x1="1034.8" y1="261.5" x2="1039.8" y2="261.5" stroke="#9a9a9a" stroke-width="1.3"/>
<text x="1035.3" y="267.5" font-size="15.3" fill="#d6d6d6" textLength="15.5" lengthAdjust="spacingAndGlyphs" text-anchor="end">15</text>
<line x1="1034.8" y1="309.1" x2="1039.8" y2="309.1" stroke="#9a9a9a" stroke-width="1.3"/>
<text x="1035.3" y="315.1" font-size="15.3" fill="#d6d6d6" textLength="15.5" lengthAdjust="spacingAndGlyphs" text-anchor="end">10</text>
<line x1="1034.8" y1="356.8" x2="1039.8" y2="356.8" stroke="#9a9a9a" stroke-width="1.3"/>
<text x="1035.3" y="362.8" font-size="15.3" fill="#d6d6d6" textLength="7.7" lengthAdjust="spacingAndGlyphs" text-anchor="end">5</text>
<line x1="1034.8" y1="404.4" x2="1039.8" y2="404.4" stroke="#9a9a9a" stroke-width="1.3"/>
<text x="1035.3" y="410.4" font-size="15.3" fill="#d6d6d6" textLength="7.7" lengthAdjust="spacingAndGlyphs" text-anchor="end">0</text>
<line x1="1034.8" y1="452.1" x2="1039.8" y2="452.1" stroke="#9a9a9a" stroke-width="1.3"/>
<text x="1035.3" y="458.1" font-size="15.3" fill="#d6d6d6" textLength="12.4" lengthAdjust="spacingAndGlyphs" text-anchor="end">-5</text>
<line x1="1034.8" y1="499.8" x2="1039.8" y2="499.8" stroke="#9a9a9a" stroke-width="1.3"/>
<text x="1035.3" y="505.8" font-size="15.3" fill="#d6d6d6" textLength="20.1" lengthAdjust="spacingAndGlyphs" text-anchor="end">-10</text>
<line x1="1034.8" y1="547.4" x2="1039.8" y2="547.4" stroke="#9a9a9a" stroke-width="1.3"/>
<text x="1035.3" y="553.4" font-size="15.3" fill="#d6d6d6" textLength="20.1" lengthAdjust="spacingAndGlyphs" text-anchor="end">-15</text>
<line x1="1039.8" y1="547.4" x2="1039.8" y2="553.4" stroke="#9a9a9a" stroke-width="1.3"/>
<line x1="1187.3" y1="547.4" x2="1187.3" y2="553.4" stroke="#9a9a9a" stroke-width="1.3"/>
<text x="1100.0" y="256.0" font-size="15.3" fill="#d6d6d6" textLength="46.4" lengthAdjust="spacingAndGlyphs" text-anchor="middle">Delta H</text>
<text x="1113.5" y="564.3" font-size="15.3" fill="#d6d6d6" textLength="35.6" lengthAdjust="spacingAndGlyphs" text-anchor="middle">100%</text>
<rect x="1055.2" y="405" width="116.8" height="10.4" fill="url(#gYel)" stroke="#000" stroke-width="1.3"/>
<rect x="606.5" y="574.7" width="600.5" height="165.3" fill="#000"/>
<rect x="627.3" y="581.7" width="100.4" height="134.0" fill="#c5c1a0"/>
<rect x="627.3" y="648.4" width="100.4" height="67.3" fill="#c0c2a0"/>
<rect x="627.3" y="581.7" width="100.4" height="134" fill="none" stroke="#f4f4f4" stroke-width="1.1"/>
<text x="677.4" y="731.3" font-size="11.5" fill="#fff" textLength="23.3" lengthAdjust="spacingAndGlyphs" text-anchor="middle" stroke="#fff" stroke-width="0.35">20%</text>
<rect x="744.9" y="581.7" width="100.4" height="134.0" fill="#c4c081"/>
<rect x="744.9" y="648.4" width="100.4" height="67.3" fill="#c0c081"/>
<rect x="744.9" y="581.7" width="100.4" height="134" fill="none" stroke="#f4f4f4" stroke-width="1.1"/>
<text x="795.0" y="731.3" font-size="11.5" fill="#fff" textLength="23.3" lengthAdjust="spacingAndGlyphs" text-anchor="middle" stroke="#fff" stroke-width="0.35">40%</text>
<rect x="862.5" y="581.7" width="100.4" height="134.0" fill="#c4c060"/>
<rect x="862.5" y="648.4" width="100.4" height="67.3" fill="#c1c060"/>
<rect x="862.5" y="581.7" width="100.4" height="134" fill="none" stroke="#f4f4f4" stroke-width="1.1"/>
<text x="912.6" y="731.3" font-size="11.5" fill="#fff" textLength="23.3" lengthAdjust="spacingAndGlyphs" text-anchor="middle" stroke="#fff" stroke-width="0.35">60%</text>
<rect x="980.2" y="581.7" width="100.4" height="134.0" fill="#c6be32"/>
<rect x="980.2" y="648.4" width="100.4" height="67.3" fill="#c1c02e"/>
<rect x="980.2" y="581.7" width="100.4" height="134" fill="none" stroke="#f4f4f4" stroke-width="1.1"/>
<text x="1030.3" y="731.3" font-size="11.5" fill="#fff" textLength="23.3" lengthAdjust="spacingAndGlyphs" text-anchor="middle" stroke="#fff" stroke-width="0.35">80%</text>
<rect x="1097.8" y="581.7" width="100.4" height="134.0" fill="#c9c422"/>
<rect x="1097.8" y="648.4" width="100.4" height="67.3" fill="#c6c600"/>
<rect x="1097.8" y="581.7" width="100.4" height="134" fill="none" stroke="#f4f4f4" stroke-width="1.1"/>
<text x="1147.9" y="731.3" font-size="11.5" fill="#fff" textLength="30.4" lengthAdjust="spacingAndGlyphs" text-anchor="middle" stroke="#fff" stroke-width="0.35">100%</text>
<text transform="translate(619.8,611) rotate(-90)" font-size="11.3" fill="#fff" text-anchor="middle" textLength="35.5" lengthAdjust="spacingAndGlyphs" stroke="#fff" stroke-width="0.3">Actual</text>
<text transform="translate(619.8,686.7) rotate(-90)" font-size="11.3" fill="#fff" text-anchor="middle" textLength="35" lengthAdjust="spacingAndGlyphs" stroke="#fff" stroke-width="0.3">Target</text>
<text x="276.7" y="785.0" font-size="26.6" fill="#f2f2f2" textLength="235.6" lengthAdjust="spacingAndGlyphs">Avg dE2000: 1.15</text>
<text x="272.7" y="826.7" font-size="26.6" fill="#f2f2f2" textLength="245.0" lengthAdjust="spacingAndGlyphs">Max dE2000: 2.05</text>
<text x="241.0" y="875.0" font-size="26.6" fill="#f2f2f2" textLength="221.3" lengthAdjust="spacingAndGlyphs">Current Reading</text>
<text x="241.0" y="911.7" font-size="23.3" fill="#f2f2f2" textLength="89.0" lengthAdjust="spacingAndGlyphs">x: 0.439</text>
<text x="400.0" y="911.7" font-size="23.3" fill="#f2f2f2" textLength="103.5" lengthAdjust="spacingAndGlyphs">y: 0.5289</text>
<text x="241.0" y="952.3" font-size="23.3" fill="#f2f2f2" textLength="82.5" lengthAdjust="spacingAndGlyphs">fL: 78.5</text>
<text x="241.0" y="986.7" font-size="23.3" fill="#f2f2f2" textLength="160.7" lengthAdjust="spacingAndGlyphs">cd/m²: 268.95</text>
<text x="699.0" y="786.8" font-size="14.5" fill="#d6d6d6" textLength="83.5" lengthAdjust="spacingAndGlyphs" text-anchor="middle">RGB Balance</text>
<rect x="587.8" y="793.6" width="253.9" height="183.0" fill="#232323" stroke="#9a9a9a" stroke-width="2"/>
<line x1="587.8" y1="839.4" x2="841.7" y2="839.4" stroke="#9a9a9a" stroke-width="1.3"/>
<line x1="587.8" y1="885.1" x2="841.7" y2="885.1" stroke="#9a9a9a" stroke-width="1.3"/>
<line x1="587.8" y1="930.9" x2="841.7" y2="930.9" stroke="#9a9a9a" stroke-width="1.3"/>
<line x1="582.8" y1="793.6" x2="587.8" y2="793.6" stroke="#9a9a9a" stroke-width="1.3"/>
<text x="581.8" y="799.6" font-size="15.3" fill="#d6d6d6" textLength="22.2" lengthAdjust="spacingAndGlyphs" text-anchor="end">110</text>
<line x1="582.8" y1="839.4" x2="587.8" y2="839.4" stroke="#9a9a9a" stroke-width="1.3"/>
<text x="581.8" y="845.4" font-size="15.3" fill="#d6d6d6" textLength="23.2" lengthAdjust="spacingAndGlyphs" text-anchor="end">105</text>
<line x1="582.8" y1="885.1" x2="587.8" y2="885.1" stroke="#9a9a9a" stroke-width="1.3"/>
<text x="581.8" y="891.1" font-size="15.3" fill="#d6d6d6" textLength="23.2" lengthAdjust="spacingAndGlyphs" text-anchor="end">100</text>
<line x1="582.8" y1="930.9" x2="587.8" y2="930.9" stroke="#9a9a9a" stroke-width="1.3"/>
<text x="581.8" y="936.9" font-size="15.3" fill="#d6d6d6" textLength="15.5" lengthAdjust="spacingAndGlyphs" text-anchor="end">95</text>
<line x1="582.8" y1="976.6" x2="587.8" y2="976.6" stroke="#9a9a9a" stroke-width="1.3"/>
<text x="581.8" y="982.6" font-size="15.3" fill="#d6d6d6" textLength="15.5" lengthAdjust="spacingAndGlyphs" text-anchor="end">90</text>
<line x1="587.8" y1="976.6" x2="587.8" y2="982.6" stroke="#9a9a9a" stroke-width="1.3"/>
<line x1="841.7" y1="976.6" x2="841.7" y2="982.6" stroke="#9a9a9a" stroke-width="1.3"/>
<text x="715.0" y="992.0" font-size="15.3" fill="#d6d6d6" textLength="35.6" lengthAdjust="spacingAndGlyphs" text-anchor="middle">100%</text>
<rect x="612.7" y="875" width="66.5" height="100.3" fill="url(#gR)" stroke="#000" stroke-width="1.3"/>
<rect x="680.6" y="884" width="66.2" height="91.3" fill="url(#gG)" stroke="#000" stroke-width="1.3"/>
<rect x="748.3" y="837.3" width="66.1" height="138.0" fill="url(#gB)" stroke="#000" stroke-width="1.3"/>
<rect x="862.3" y="762.3" width="1049.2" height="238.6" fill="none" stroke="#b0b0b0" stroke-width="1" stroke-dasharray="1 1.6"/>
<rect x="863.5" y="763.5" width="738.0" height="26.2" fill="url(#gTh)"/>
<text x="1115.3" y="782.5" font-size="15.1" fill="#fff" textLength="41.0" lengthAdjust="spacingAndGlyphs" text-anchor="middle">20%</text>
<text x="1223.3" y="782.5" font-size="15.1" fill="#fff" textLength="41.0" lengthAdjust="spacingAndGlyphs" text-anchor="middle">40%</text>
<text x="1331.3" y="782.5" font-size="15.1" fill="#fff" textLength="41.0" lengthAdjust="spacingAndGlyphs" text-anchor="middle">60%</text>
<text x="1439.3" y="782.5" font-size="15.1" fill="#fff" textLength="41.0" lengthAdjust="spacingAndGlyphs" text-anchor="middle">80%</text>
<text x="1547.3" y="782.5" font-size="15.1" fill="#fff" textLength="52.6" lengthAdjust="spacingAndGlyphs" text-anchor="middle">100%</text>
<rect x="863.5" y="789.7" width="738.0" height="26.3" fill="#424242"/>
<text x="882.0" y="811.0" font-size="17" fill="#fff" textLength="88.0" lengthAdjust="spacingAndGlyphs" font-weight="bold">x: CIE31</text>
<text x="1067.3" y="811.0" font-size="17" fill="#fff" textLength="68.7" lengthAdjust="spacingAndGlyphs">0.3392</text>
<text x="1175.3" y="811.0" font-size="17" fill="#fff" textLength="68.7" lengthAdjust="spacingAndGlyphs">0.3642</text>
<text x="1283.3" y="811.0" font-size="17" fill="#fff" textLength="68.7" lengthAdjust="spacingAndGlyphs">0.3898</text>
<text x="1391.3" y="811.0" font-size="17" fill="#fff" textLength="68.7" lengthAdjust="spacingAndGlyphs">0.4139</text>
<text x="1499.3" y="811.0" font-size="17" fill="#fff" textLength="68.7" lengthAdjust="spacingAndGlyphs">0.4390</text>
<rect x="863.5" y="816.0" width="738.0" height="26.3" fill="#828282"/>
<text x="882.0" y="837.3" font-size="17" fill="#f0f0f0" textLength="88.0" lengthAdjust="spacingAndGlyphs" font-weight="bold">y: CIE31</text>
<text x="1067.3" y="837.3" font-size="17" fill="#f4f4f4" textLength="68.7" lengthAdjust="spacingAndGlyphs">0.3698</text>
<text x="1175.3" y="837.3" font-size="17" fill="#f4f4f4" textLength="68.7" lengthAdjust="spacingAndGlyphs">0.4096</text>
<text x="1283.3" y="837.3" font-size="17" fill="#f4f4f4" textLength="68.7" lengthAdjust="spacingAndGlyphs">0.4498</text>
<text x="1391.3" y="837.3" font-size="17" fill="#f4f4f4" textLength="68.7" lengthAdjust="spacingAndGlyphs">0.4877</text>
<text x="1499.3" y="837.3" font-size="17" fill="#f4f4f4" textLength="68.7" lengthAdjust="spacingAndGlyphs">0.5289</text>
<rect x="863.5" y="842.3" width="738.0" height="26.3" fill="#424242"/>
<text x="882.0" y="863.6" font-size="17" fill="#fff" textLength="14.0" lengthAdjust="spacingAndGlyphs" font-weight="bold">Y</text>
<text x="1067.3" y="863.6" font-size="17" fill="#fff" textLength="95.0" lengthAdjust="spacingAndGlyphs">277.8792</text>
<text x="1175.3" y="863.6" font-size="17" fill="#fff" textLength="95.0" lengthAdjust="spacingAndGlyphs">273.2980</text>
<text x="1283.3" y="863.6" font-size="17" fill="#fff" textLength="95.0" lengthAdjust="spacingAndGlyphs">269.7078</text>
<text x="1391.3" y="863.6" font-size="17" fill="#fff" textLength="95.0" lengthAdjust="spacingAndGlyphs">267.2678</text>
<text x="1499.3" y="863.6" font-size="17" fill="#fff" textLength="95.0" lengthAdjust="spacingAndGlyphs">268.9495</text>
<rect x="863.5" y="868.6" width="738.0" height="26.3" fill="#828282"/>
<text x="882.0" y="889.9" font-size="17" fill="#f0f0f0" textLength="158.5" lengthAdjust="spacingAndGlyphs" font-weight="bold">Target x:CIE31</text>
<text x="1067.3" y="889.9" font-size="17" fill="#f4f4f4" textLength="68.7" lengthAdjust="spacingAndGlyphs">0.3384</text>
<text x="1175.3" y="889.9" font-size="17" fill="#f4f4f4" textLength="68.7" lengthAdjust="spacingAndGlyphs">0.3619</text>
<text x="1283.3" y="889.9" font-size="17" fill="#f4f4f4" textLength="68.7" lengthAdjust="spacingAndGlyphs">0.3869</text>
<text x="1391.3" y="889.9" font-size="17" fill="#f4f4f4" textLength="68.7" lengthAdjust="spacingAndGlyphs">0.4128</text>
<text x="1499.3" y="889.9" font-size="17" fill="#f4f4f4" textLength="68.7" lengthAdjust="spacingAndGlyphs">0.4378</text>
<rect x="863.5" y="894.9" width="738.0" height="26.3" fill="#424242"/>
<text x="882.0" y="916.2" font-size="17" fill="#fff" textLength="158.5" lengthAdjust="spacingAndGlyphs" font-weight="bold">Target y:CIE31</text>
<text x="1067.3" y="916.2" font-size="17" fill="#fff" textLength="68.7" lengthAdjust="spacingAndGlyphs">0.3714</text>
<text x="1175.3" y="916.2" font-size="17" fill="#fff" textLength="68.7" lengthAdjust="spacingAndGlyphs">0.4103</text>
<text x="1283.3" y="916.2" font-size="17" fill="#fff" textLength="68.7" lengthAdjust="spacingAndGlyphs">0.4517</text>
<text x="1391.3" y="916.2" font-size="17" fill="#fff" textLength="68.7" lengthAdjust="spacingAndGlyphs">0.4944</text>
<text x="1499.3" y="916.2" font-size="17" fill="#fff" textLength="68.7" lengthAdjust="spacingAndGlyphs">0.5359</text>
<rect x="863.5" y="921.2" width="738.0" height="26.3" fill="#828282"/>
<text x="882.0" y="942.5" font-size="17" fill="#f0f0f0" textLength="91.0" lengthAdjust="spacingAndGlyphs" font-weight="bold">Target Y</text>
<text x="1067.3" y="942.5" font-size="17" fill="#f4f4f4" textLength="95.0" lengthAdjust="spacingAndGlyphs">280.7790</text>
<text x="1175.3" y="942.5" font-size="17" fill="#f4f4f4" textLength="95.0" lengthAdjust="spacingAndGlyphs">275.7437</text>
<text x="1283.3" y="942.5" font-size="17" fill="#f4f4f4" textLength="95.0" lengthAdjust="spacingAndGlyphs">271.4844</text>
<text x="1391.3" y="942.5" font-size="17" fill="#f4f4f4" textLength="95.0" lengthAdjust="spacingAndGlyphs">267.9390</text>
<text x="1499.3" y="942.5" font-size="17" fill="#f4f4f4" textLength="95.0" lengthAdjust="spacingAndGlyphs">265.1044</text>
<rect x="863.5" y="947.5" width="738.0" height="26.3" fill="#424242"/>
<text x="882.0" y="968.8" font-size="17" fill="#fff" textLength="91.0" lengthAdjust="spacingAndGlyphs" font-weight="bold">ΔE 2000</text>
<text x="1067.3" y="968.8" font-size="17" fill="#fff" textLength="68.7" lengthAdjust="spacingAndGlyphs">0.9253</text>
<text x="1175.3" y="968.8" font-size="17" fill="#fff" textLength="68.7" lengthAdjust="spacingAndGlyphs">0.8057</text>
<text x="1283.3" y="968.8" font-size="17" fill="#fff" textLength="68.7" lengthAdjust="spacingAndGlyphs">0.9245</text>
<text x="1391.3" y="968.8" font-size="17" fill="#fff" textLength="68.7" lengthAdjust="spacingAndGlyphs">1.0679</text>
<text x="1499.3" y="968.8" font-size="17" fill="#fff" textLength="68.7" lengthAdjust="spacingAndGlyphs">0.9619</text>
<rect x="863.5" y="973.8" width="738.0" height="26.3" fill="#828282"/>
<text x="882.0" y="995.1" font-size="17" fill="#f0f0f0" textLength="72.0" lengthAdjust="spacingAndGlyphs" font-weight="bold">ΔE ITP</text>
<text x="1067.3" y="995.1" font-size="17" fill="#f4f4f4" textLength="68.7" lengthAdjust="spacingAndGlyphs">1.2901</text>
<text x="1175.3" y="995.1" font-size="17" fill="#f4f4f4" textLength="68.7" lengthAdjust="spacingAndGlyphs">1.6070</text>
<text x="1283.3" y="995.1" font-size="17" fill="#f4f4f4" textLength="68.7" lengthAdjust="spacingAndGlyphs">1.9684</text>
<text x="1391.3" y="995.1" font-size="17" fill="#f4f4f4" textLength="68.7" lengthAdjust="spacingAndGlyphs">3.7666</text>
<text x="1499.3" y="995.1" font-size="17" fill="#f4f4f4" textLength="68.7" lengthAdjust="spacingAndGlyphs">5.1208</text>
<line x1="1601.5" y1="763.5" x2="1601.5" y2="1000.2" stroke="#222" stroke-width="1"/>
<rect x="1214.5" y="187.0" width="706.0" height="567.0" fill="#1f1f1f"/>
<rect x="1221.0" y="193.7" width="691.5" height="553.0" fill="#333"/>
<rect x="1259.3" y="218.6" width="649.7" height="499.4" fill="#232323"/>
<text x="1566.5" y="213.0" font-size="15.3" fill="#d6d6d6" textLength="86.0" lengthAdjust="spacingAndGlyphs" text-anchor="middle">CIE 1976 u'v'</text>
<line x1="1259.3" y1="718.0" x2="1259.3" y2="724.0" stroke="#9a9a9a" stroke-width="1.3"/>
<text x="1259.3" y="739.6" font-size="15.3" fill="#d6d6d6" textLength="7.7" lengthAdjust="spacingAndGlyphs" text-anchor="middle">0</text>
<line x1="1253.8" y1="718.0" x2="1259.3" y2="718.0" stroke="#9a9a9a" stroke-width="1.3"/>
<text x="1253.8" y="724.0" font-size="15.3" fill="#d6d6d6" textLength="7.7" lengthAdjust="spacingAndGlyphs" text-anchor="end">0</text>
<line x1="1313.3" y1="718.0" x2="1313.3" y2="724.0" stroke="#9a9a9a" stroke-width="1.3"/>
<text x="1313.3" y="739.6" font-size="15.3" fill="#d6d6d6" textLength="27.1" lengthAdjust="spacingAndGlyphs" text-anchor="middle">0.05</text>
<line x1="1253.8" y1="676.4" x2="1259.3" y2="676.4" stroke="#9a9a9a" stroke-width="1.3"/>
<text x="1253.8" y="682.4" font-size="15.3" fill="#d6d6d6" textLength="27.1" lengthAdjust="spacingAndGlyphs" text-anchor="end">0.05</text>
<line x1="1367.3" y1="718.0" x2="1367.3" y2="724.0" stroke="#9a9a9a" stroke-width="1.3"/>
<text x="1367.3" y="739.6" font-size="15.3" fill="#d6d6d6" textLength="19.4" lengthAdjust="spacingAndGlyphs" text-anchor="middle">0.1</text>
<line x1="1253.8" y1="634.9" x2="1259.3" y2="634.9" stroke="#9a9a9a" stroke-width="1.3"/>
<text x="1253.8" y="640.9" font-size="15.3" fill="#d6d6d6" textLength="19.4" lengthAdjust="spacingAndGlyphs" text-anchor="end">0.1</text>
<line x1="1421.3" y1="718.0" x2="1421.3" y2="724.0" stroke="#9a9a9a" stroke-width="1.3"/>
<text x="1421.3" y="739.6" font-size="15.3" fill="#d6d6d6" textLength="27.1" lengthAdjust="spacingAndGlyphs" text-anchor="middle">0.15</text>
<line x1="1253.8" y1="593.3" x2="1259.3" y2="593.3" stroke="#9a9a9a" stroke-width="1.3"/>
<text x="1253.8" y="599.3" font-size="15.3" fill="#d6d6d6" textLength="27.1" lengthAdjust="spacingAndGlyphs" text-anchor="end">0.15</text>
<line x1="1475.3" y1="718.0" x2="1475.3" y2="724.0" stroke="#9a9a9a" stroke-width="1.3"/>
<text x="1475.3" y="739.6" font-size="15.3" fill="#d6d6d6" textLength="19.4" lengthAdjust="spacingAndGlyphs" text-anchor="middle">0.2</text>
<line x1="1253.8" y1="551.7" x2="1259.3" y2="551.7" stroke="#9a9a9a" stroke-width="1.3"/>
<text x="1253.8" y="557.7" font-size="15.3" fill="#d6d6d6" textLength="19.4" lengthAdjust="spacingAndGlyphs" text-anchor="end">0.2</text>
<line x1="1529.3" y1="718.0" x2="1529.3" y2="724.0" stroke="#9a9a9a" stroke-width="1.3"/>
<text x="1529.3" y="739.6" font-size="15.3" fill="#d6d6d6" textLength="27.1" lengthAdjust="spacingAndGlyphs" text-anchor="middle">0.25</text>
<line x1="1253.8" y1="510.1" x2="1259.3" y2="510.1" stroke="#9a9a9a" stroke-width="1.3"/>
<text x="1253.8" y="516.1" font-size="15.3" fill="#d6d6d6" textLength="27.1" lengthAdjust="spacingAndGlyphs" text-anchor="end">0.25</text>
<line x1="1583.3" y1="718.0" x2="1583.3" y2="724.0" stroke="#9a9a9a" stroke-width="1.3"/>
<text x="1583.3" y="739.6" font-size="15.3" fill="#d6d6d6" textLength="19.4" lengthAdjust="spacingAndGlyphs" text-anchor="middle">0.3</text>
<line x1="1253.8" y1="468.5" x2="1259.3" y2="468.5" stroke="#9a9a9a" stroke-width="1.3"/>
<text x="1253.8" y="474.5" font-size="15.3" fill="#d6d6d6" textLength="19.4" lengthAdjust="spacingAndGlyphs" text-anchor="end">0.3</text>
<line x1="1637.3" y1="718.0" x2="1637.3" y2="724.0" stroke="#9a9a9a" stroke-width="1.3"/>
<text x="1637.3" y="739.6" font-size="15.3" fill="#d6d6d6" textLength="27.1" lengthAdjust="spacingAndGlyphs" text-anchor="middle">0.35</text>
<line x1="1253.8" y1="427.0" x2="1259.3" y2="427.0" stroke="#9a9a9a" stroke-width="1.3"/>
<text x="1253.8" y="433.0" font-size="15.3" fill="#d6d6d6" textLength="27.1" lengthAdjust="spacingAndGlyphs" text-anchor="end">0.35</text>
<line x1="1691.3" y1="718.0" x2="1691.3" y2="724.0" stroke="#9a9a9a" stroke-width="1.3"/>
<text x="1691.3" y="739.6" font-size="15.3" fill="#d6d6d6" textLength="19.4" lengthAdjust="spacingAndGlyphs" text-anchor="middle">0.4</text>
<line x1="1253.8" y1="385.4" x2="1259.3" y2="385.4" stroke="#9a9a9a" stroke-width="1.3"/>
<text x="1253.8" y="391.4" font-size="15.3" fill="#d6d6d6" textLength="19.4" lengthAdjust="spacingAndGlyphs" text-anchor="end">0.4</text>
<line x1="1745.3" y1="718.0" x2="1745.3" y2="724.0" stroke="#9a9a9a" stroke-width="1.3"/>
<text x="1745.3" y="739.6" font-size="15.3" fill="#d6d6d6" textLength="27.1" lengthAdjust="spacingAndGlyphs" text-anchor="middle">0.45</text>
<line x1="1253.8" y1="343.8" x2="1259.3" y2="343.8" stroke="#9a9a9a" stroke-width="1.3"/>
<text x="1253.8" y="349.8" font-size="15.3" fill="#d6d6d6" textLength="27.1" lengthAdjust="spacingAndGlyphs" text-anchor="end">0.45</text>
<line x1="1799.3" y1="718.0" x2="1799.3" y2="724.0" stroke="#9a9a9a" stroke-width="1.3"/>
<text x="1799.3" y="739.6" font-size="15.3" fill="#d6d6d6" textLength="19.4" lengthAdjust="spacingAndGlyphs" text-anchor="middle">0.5</text>
<line x1="1253.8" y1="302.2" x2="1259.3" y2="302.2" stroke="#9a9a9a" stroke-width="1.3"/>
<text x="1253.8" y="308.2" font-size="15.3" fill="#d6d6d6" textLength="19.4" lengthAdjust="spacingAndGlyphs" text-anchor="end">0.5</text>
<line x1="1853.3" y1="718.0" x2="1853.3" y2="724.0" stroke="#9a9a9a" stroke-width="1.3"/>
<text x="1853.3" y="739.6" font-size="15.3" fill="#d6d6d6" textLength="27.1" lengthAdjust="spacingAndGlyphs" text-anchor="middle">0.55</text>
<line x1="1253.8" y1="260.7" x2="1259.3" y2="260.7" stroke="#9a9a9a" stroke-width="1.3"/>
<text x="1253.8" y="266.7" font-size="15.3" fill="#d6d6d6" textLength="27.1" lengthAdjust="spacingAndGlyphs" text-anchor="end">0.55</text>
<rect x="225.5" y="1075.5" width="1695.0" height="71.0" fill="url(#gBot)"/>
<rect x="226.5" y="1076.5" width="50.5" height="67.8" rx="4" fill="url(#gBB)"/>
<circle cx="251.3" cy="1086.3" r="8" fill="url(#gDD2)"/>
<path d="M246.6,1088.3 h9.4 l-4.7,-4.6Z" fill="#1a1a1a"/>
<rect x="232" y="1105.8" width="39.8" height="33.8" rx="3.5" fill="#ffff00" stroke="#b4b400" stroke-width="0.8"/>
<rect x="283.8" y="1076.5" width="168.4" height="67.8" rx="4" fill="url(#gBB)"/>
<rect x="290.1" y="1082.6" width="157" height="39.6" rx="3.5" fill="#c0c2a0" stroke="#8a8a6a" stroke-width="0.8"/>
<text x="368.1" y="1140.0" font-size="11.6" fill="#222" textLength="23.2" lengthAdjust="spacingAndGlyphs" text-anchor="middle" font-weight="bold">20%</text>
<rect x="454.9" y="1076.5" width="168.4" height="67.8" rx="4" fill="url(#gBB)"/>
<rect x="461.2" y="1082.6" width="157" height="39.6" rx="3.5" fill="#c0c084" stroke="#8a8a6a" stroke-width="0.8"/>
<text x="539.2" y="1140.0" font-size="11.6" fill="#222" textLength="23.2" lengthAdjust="spacingAndGlyphs" text-anchor="middle" font-weight="bold">40%</text>
<rect x="626.0" y="1076.5" width="168.4" height="67.8" rx="4" fill="url(#gBB)"/>
<rect x="632.3" y="1082.6" width="157" height="39.6" rx="3.5" fill="#c0be6a" stroke="#8a8a6a" stroke-width="0.8"/>
<text x="710.3" y="1140.0" font-size="11.6" fill="#222" textLength="23.2" lengthAdjust="spacingAndGlyphs" text-anchor="middle" font-weight="bold">60%</text>
<rect x="797.1" y="1076.5" width="168.4" height="67.8" rx="4" fill="url(#gBB)"/>
<rect x="803.4" y="1082.6" width="157" height="39.6" rx="3.5" fill="#c0be48" stroke="#8a8a6a" stroke-width="0.8"/>
<text x="881.4" y="1140.0" font-size="11.6" fill="#222" textLength="23.2" lengthAdjust="spacingAndGlyphs" text-anchor="middle" font-weight="bold">80%</text>
<rect x="968.2" y="1076.5" width="168.4" height="67.8" rx="4" fill="url(#gSelB)"/>
<rect x="973.2" y="1082.6" width="157.6" height="40" rx="3.5" fill="#c4c200" stroke="#8a8a00" stroke-width="0.8"/>
<text x="1052.5" y="1140.0" font-size="11.6" fill="#fff" textLength="29.7" lengthAdjust="spacingAndGlyphs" text-anchor="middle" font-weight="bold">100%</text>
<rect x="1557" y="1076.5" width="54.3" height="19.8" rx="3.5" fill="url(#gBB)"/>
<circle cx="1584" cy="1086" r="8" fill="url(#gDD2)"/>
<path d="M1579.3,1088.3 h9.4 l-4.7,-4.6Z" fill="#1a1a1a"/>
<rect x="1557" y="1097.6" width="54.3" height="46.6" rx="3.5" fill="url(#gBB)"/>
<rect x="1567" y="1104.5" width="32.5" height="32.5" rx="4.5" fill="url(#gStop)" stroke="#2a2a2a" stroke-width="2"/>
<rect x="1575.8" y="1113.8" width="16" height="15" fill="#000"/>
<rect x="1612.8" y="1076.5" width="50.4" height="32.3" rx="2.5" fill="url(#gBB)"/>
<circle cx="1637.8" cy="1092" r="9.5" fill="url(#gDD3)"/>
<rect x="1664.0" y="1076.5" width="50.4" height="32.3" rx="2.5" fill="url(#gBB)"/>
<circle cx="1689.0" cy="1092" r="9.5" fill="url(#gDD3)"/>
<rect x="1715.2" y="1076.5" width="50.4" height="32.3" rx="2.5" fill="url(#gBB)"/>
<circle cx="1740.2" cy="1092" r="9.5" fill="url(#gDD3)"/>
<rect x="1766.4" y="1076.5" width="50.4" height="32.3" rx="2.5" fill="url(#gBB)"/>
<circle cx="1791.4" cy="1092" r="9.5" fill="url(#gDD3)"/>
<rect x="1817.6" y="1076.5" width="50.4" height="32.3" rx="2.5" fill="url(#gBB)"/>
<circle cx="1842.6" cy="1092" r="9.5" fill="url(#gDD3)"/>
<rect x="1868.8" y="1076.5" width="50.4" height="32.3" rx="2.5" fill="url(#gBB)"/>
<circle cx="1893.8" cy="1092" r="9.5" fill="url(#gDD3)"/>
<rect x="1632.5" y="1087" width="8" height="9" rx="1" fill="#2e2e2e"/>
<path d="M1685.5,1086 v12 l9,-6Z" fill="#2e2e2e"/>
<path d="M1736.5,1086.5 h-2.5 v11 h2.5 M1744,1086.5 h2.5 v11 h-2.5" fill="none" stroke="#2e2e2e" stroke-width="1.5"/>
<circle cx="1738.7" cy="1092" r="0.9" fill="#2e2e2e"/><circle cx="1741.8" cy="1092" r="0.9" fill="#2e2e2e"/>
<path d="M1791.4,1092 c-2,-4 -7,-4 -7,0 c0,4 5,4 7,0 c2,-4 7,-4 7,0 c0,4 -5,4 -7,0Z" fill="none" stroke="#2e2e2e" stroke-width="1.6"/>
<path d="M1847,1089 a5.2,5.2 0 1 0 0.8,5" fill="none" stroke="#2e2e2e" stroke-width="1.7"/><path d="M1844.5,1086 l4.6,0.6 l-1.6,4.2Z" fill="#2e2e2e"/>
<rect x="1612.8" y="1111.3" width="151.6" height="32.9" rx="3.5" fill="url(#gBB)"/>
<rect x="1765.6" y="1111.3" width="160" height="32.9" rx="3.5" fill="url(#gBB)"/>
<circle cx="1645" cy="1128" r="10.5" fill="#8e8e8e"/>
<circle cx="1887" cy="1128" r="10.5" fill="#8e8e8e"/>
<text x="1645.0" y="1134.0" font-size="19" fill="#333" text-anchor="middle">«</text>
<text x="1887.0" y="1134.0" font-size="19" fill="#333" text-anchor="middle">»</text>
<text x="1676.7" y="1135.8" font-size="23.4" fill="#2a2a2a" textLength="56.6" lengthAdjust="spacingAndGlyphs">Back</text>
<text x="1796.3" y="1135.8" font-size="23.4" fill="#2a2a2a" textLength="58.7" lengthAdjust="spacingAndGlyphs">Next</text>
<g opacity="0.74">
<path d="M1631,1085 L1671.5,1093.5 L1673,1115 L1637,1119.5 Z M1637,1119.5 L1655.5,1134.5 L1698,1120 L1673,1115" fill="none" stroke="#f0e0e0" stroke-width="5.6" stroke-linejoin="round" stroke-opacity="0.7"/>
<path d="M1631,1085 L1671.5,1093.5 L1673,1115 L1637,1119.5 Z M1637,1119.5 L1655.5,1134.5 L1698,1120 L1673,1115" fill="none" stroke="#b03a44" stroke-width="3.1" stroke-linejoin="round"/>
<path d="M1644,1097.5 L1653.5,1110.5 L1673.5,1084" fill="none" stroke="#eee" stroke-width="6" stroke-opacity="0.8"/>
<path d="M1644,1097.5 L1653.5,1110.5 L1673.5,1084" fill="none" stroke="#333" stroke-width="3.4"/>
<text x="1675.8" y="1112.6" font-size="24.6" fill="#a83540" textLength="146.7" lengthAdjust="spacingAndGlyphs" font-weight="bold" stroke="#f4f4f4" stroke-width="3.2" stroke-opacity="0.75" paint-order="stroke" stroke-linejoin="round">NOTEBOOK</text>
<text x="1675.8" y="1112.6" font-size="24.6" fill="#a83540" textLength="146.7" lengthAdjust="spacingAndGlyphs" font-weight="bold" stroke="#a83540" stroke-width="0.8">NOTEBOOK</text>
<text x="1823.3" y="1112.6" font-size="24.6" fill="#3c3c3c" textLength="87.5" lengthAdjust="spacingAndGlyphs" stroke="#f4f4f4" stroke-width="3.2" stroke-opacity="0.75" paint-order="stroke" stroke-linejoin="round">CHECK</text>
<text x="1823.3" y="1112.6" font-size="24.6" fill="#3c3c3c" textLength="87.5" lengthAdjust="spacingAndGlyphs" stroke="#3c3c3c" stroke-width="0.5">CHECK</text>
</g>
</svg>
<div id="cie" style="position:absolute;left:1259.3px;top:218.6px;width:649.7px;height:499.4px;overflow:hidden"><div style="position:absolute;left:0;top:0;width:100%;height:100%;clip-path:polygon(276.2px 485.8px,276.2px 485.8px,276.1px 485.8px,276.0px 485.8px,275.8px 485.8px,275.7px 485.8px,275.5px 485.8px,275.3px 485.8px,275.2px 485.8px,275.0px 485.8px,274.9px 485.8px,274.7px 485.8px,274.5px 485.8px,274.3px 485.8px,274.1px 485.7px,273.9px 485.7px,273.7px 485.6px,273.5px 485.5px,273.2px 485.4px,272.8px 485.2px,272.4px 485.0px,271.9px 484.7px,271.4px 484.3px,270.8px 484.0px,270.2px 483.6px,269.6px 483.1px,268.9px 482.6px,268.2px 482.1px,267.5px 481.5px,266.7px 480.9px,265.8px 480.2px,264.8px 479.4px,263.8px 478.6px,262.7px 477.8px,261.6px 476.9px,260.4px 475.9px,259.1px 474.8px,257.8px 473.7px,256.5px 472.5px,255.0px 471.3px,253.5px 470.0px,252.0px 468.7px,250.3px 467.3px,248.6px 465.8px,246.7px 464.3px,244.8px 462.7px,242.7px 461.0px,240.5px 459.2px,238.3px 457.3px,235.9px 455.3px,233.4px 453.3px,230.8px 451.2px,228.2px 449.0px,225.4px 446.7px,222.5px 444.3px,219.5px 441.7px,216.4px 439.0px,213.2px 436.2px,209.8px 433.1px,206.3px 429.9px,202.7px 426.6px,199.0px 423.0px,195.1px 419.3px,191.1px 415.2px,187.0px 410.8px,182.5px 406.0px,177.7px 400.6px,172.6px 394.6px,167.2px 388.0px,161.5px 381.0px,155.6px 373.5px,149.6px 365.5px,143.4px 357.1px,137.0px 348.2px,130.5px 338.8px,123.8px 329.0px,117.1px 318.7px,110.2px 307.9px,103.3px 296.8px,96.4px 285.4px,89.4px 273.8px,82.5px 262.0px,75.7px 250.1px,69.0px 238.1px,62.5px 226.1px,56.3px 214.0px,50.4px 202.1px,44.9px 190.4px,39.8px 178.9px,34.9px 167.6px,30.4px 156.7px,26.2px 146.1px,22.3px 136.0px,18.8px 126.2px,15.6px 117.0px,12.8px 108.3px,10.4px 100.2px,8.2px 92.5px,6.4px 85.3px,5.0px 78.6px,3.7px 72.4px,2.8px 66.6px,2.1px 61.2px,1.7px 56.2px,1.5px 51.6px,1.5px 47.4px,1.8px 43.4px,2.3px 39.7px,3.0px 36.2px,3.9px 33.1px,5.0px 30.2px,6.3px 27.5px,7.8px 25.1px,9.5px 22.9px,11.3px 21.0px,13.3px 19.3px,15.4px 17.8px,17.6px 16.5px,20.0px 15.4px,22.4px 14.5px,25.0px 13.7px,27.6px 13.1px,30.3px 12.6px,33.1px 12.2px,36.0px 11.9px,38.9px 11.6px,41.9px 11.4px,44.9px 11.3px,47.9px 11.2px,51.0px 11.1px,54.1px 11.1px,57.1px 11.1px,60.2px 11.1px,63.3px 11.2px,66.4px 11.2px,69.5px 11.3px,72.6px 11.4px,75.8px 11.5px,79.0px 11.7px,82.3px 11.9px,85.6px 12.1px,88.9px 12.3px,92.3px 12.5px,95.8px 12.8px,99.3px 13.0px,102.9px 13.3px,106.5px 13.6px,110.2px 13.9px,114.0px 14.3px,117.8px 14.6px,121.7px 15.0px,125.7px 15.4px,129.8px 15.8px,133.9px 16.2px,138.1px 16.7px,142.4px 17.1px,146.8px 17.6px,151.3px 18.0px,155.9px 18.5px,160.6px 19.1px,165.4px 19.6px,170.2px 20.1px,175.2px 20.7px,180.3px 21.2px,185.4px 21.8px,190.7px 22.4px,196.1px 23.0px,201.6px 23.6px,207.2px 24.3px,212.9px 24.9px,218.8px 25.6px,224.7px 26.3px,230.8px 26.9px,237.0px 27.7px,243.2px 28.4px,249.6px 29.1px,256.2px 29.9px,262.8px 30.6px,269.5px 31.4px,276.4px 32.2px,283.3px 33.0px,290.4px 33.8px,297.5px 34.6px,304.8px 35.5px,312.2px 36.3px,319.6px 37.2px,327.1px 38.0px,334.7px 38.9px,342.4px 39.8px,350.2px 40.7px,358.0px 41.6px,365.9px 42.5px,373.8px 43.4px,381.7px 44.3px,389.7px 45.2px,397.5px 46.1px,405.3px 47.0px,413.0px 47.9px,420.6px 48.8px,428.2px 49.7px,435.8px 50.5px,443.4px 51.4px,450.9px 52.3px,458.4px 53.1px,465.8px 54.0px,473.0px 54.8px,480.1px 55.6px,486.9px 56.4px,493.7px 57.2px,500.2px 57.9px,506.7px 58.7px,512.9px 59.4px,519.1px 60.1px,525.0px 60.8px,530.8px 61.5px,536.4px 62.1px,541.9px 62.7px,547.1px 63.3px,552.2px 63.9px,557.1px 64.5px,561.8px 65.0px,566.4px 65.6px,570.8px 66.1px,575.0px 66.5px,579.2px 67.0px,583.1px 67.5px,586.9px 67.9px,590.6px 68.3px,594.2px 68.7px,597.6px 69.1px,601.0px 69.5px,604.3px 69.9px,607.5px 70.3px,610.6px 70.6px,613.6px 71.0px,616.5px 71.3px,619.4px 71.6px,622.1px 72.0px,624.7px 72.3px,627.2px 72.5px,629.7px 72.8px,632.0px 73.1px,634.3px 73.4px,636.4px 73.6px,638.5px 73.8px,640.4px 74.1px,642.2px 74.3px,643.9px 74.5px,645.5px 74.7px,647.1px 74.8px,648.5px 75.0px,649.9px 75.2px,651.2px 75.3px,652.5px 75.5px,653.7px 75.6px,654.9px 75.7px,656.0px 75.9px,657.0px 76.0px,657.9px 76.1px,658.8px 76.2px,659.7px 76.3px,660.4px 76.4px,661.1px 76.4px,661.7px 76.5px,662.3px 76.6px,662.8px 76.6px,663.4px 76.7px,663.9px 76.8px,664.5px 76.8px,665.0px 76.9px,665.4px 76.9px,665.9px 77.0px,666.3px 77.1px,666.7px 77.1px,667.1px 77.1px,667.5px 77.2px,667.9px 77.2px,668.3px 77.3px,668.7px 77.3px,669.1px 77.4px,669.5px 77.4px,669.9px 77.5px,670.3px 77.5px,670.7px 77.6px,671.0px 77.6px,671.4px 77.6px,671.6px 77.7px,671.9px 77.7px,672.1px 77.7px,672.2px 77.7px,672.4px 77.7px,672.5px 77.8px,672.6px 77.8px,672.7px 77.8px,672.9px 77.8px,672.9px 77.8px,673.0px 77.8px,673.1px 77.8px,673.2px 77.8px,673.2px 77.8px,673.2px 77.8px)"><i style="left:30px;top:10px;width:62px;background:linear-gradient(90deg,#00ff00 0px,#00ff00 62px)"></i><i style="left:21px;top:12px;width:96px;background:linear-gradient(90deg,#00ff02 0px,#03ff00 88px,#0cff00 96px)"></i><i style="left:16px;top:14px;width:121px;background:linear-gradient(90deg,#00ff04 0px,#03ff00 93px,#29ff00 121px)"></i><i style="left:13px;top:16px;width:143px;background:linear-gradient(90deg,#00ff07 0px,#03ff00 97px,#31ff00 129px,#4cff00 143px)"></i><i style="left:10px;top:18px;width:164px;background:linear-gradient(90deg,#00ff09 0px,#03ff00 100px,#2fff00 131px,#73ff00 164px)"></i><i style="left:8px;top:20px;width:184px;background:linear-gradient(90deg,#00ff0b 0px,#02ff02 102px,#2eff00 133px,#78ff00 168px,#a1ff00 184px)"></i><i style="left:7px;top:22px;width:203px;background:linear-gradient(90deg,#00ff0e 0px,#03ff04 104px,#2fff01 135px,#7aff00 170px,#d4ff00 202px,#d7ff00 203px)"></i><i style="left:5px;top:24px;width:222px;background:linear-gradient(90deg,#00ff10 0px,#02ff06 106px,#2fff03 137px,#77ff00 171px,#d1ff00 203px,#fffd00 217px,#ffed00 222px)"></i><i style="left:4px;top:26px;width:241px;background:linear-gradient(90deg,#00ff12 0px,#03ff09 108px,#30ff05 139px,#7aff01 173px,#d5ff00 205px,#fffd00 218px,#ffc000 239px,#ffbb00 241px)"></i><i style="left:3px;top:28px;width:259px;background:linear-gradient(90deg,#00ff15 0px,#02ff0b 109px,#2eff08 139px,#77ff04 173px,#d2ff00 205px,#fffc00 219px,#ffbf00 240px,#ff9800 259px)"></i><i style="left:3px;top:30px;width:277px;background:linear-gradient(90deg,#00ff17 0px,#03ff0e 110px,#2fff0b 140px,#79ff07 174px,#d2ff03 205px,#ffff01 218px,#ffc300 238px,#ff8d00 265px,#ff7b00 277px)"></i><i style="left:2px;top:32px;width:295px;background:linear-gradient(90deg,#00ff1a 0px,#02ff11 111px,#2fff0e 141px,#79ff0a 175px,#d3ff06 206px,#fffe04 219px,#ffc201 239px,#ff8c00 266px,#ff6500 295px)"></i><i style="left:1px;top:34px;width:313px;background:linear-gradient(90deg,#00ff1d 0px,#03ff14 113px,#30ff11 143px,#79ff0d 176px,#d3ff09 207px,#fffe07 220px,#ffc103 240px,#ff8b00 267px,#ff5c00 304px,#ff5400 313px)"></i><i style="left:1px;top:36px;width:331px;background:linear-gradient(90deg,#00ff1f 0px,#03ff17 113px,#30ff14 143px,#79ff10 176px,#d3ff0c 207px,#fffd0a 220px,#ffc106 240px,#ff8a02 267px,#ff5b00 304px,#ff4400 331px)"></i><i style="left:1px;top:38px;width:348px;background:linear-gradient(90deg,#00ff22 0px,#03ff1a 114px,#31ff17 144px,#7bff14 177px,#d4ff10 207px,#fffc0e 220px,#ffc009 240px,#ff8a04 267px,#ff5b00 304px,#ff3900 348px)"></i><i style="left:0px;top:40px;width:367px;background:linear-gradient(90deg,#00ff25 0px,#03ff1d 115px,#2fff1b 144px,#78ff17 177px,#d1ff14 207px,#ffff12 220px,#ffc20c 240px,#ff8c06 266px,#ff5c02 303px,#ff3400 356px,#ff2e00 367px)"></i><i style="left:0px;top:42px;width:384px;background:linear-gradient(90deg,#00ff28 0px,#02ff21 115px,#2eff1e 144px,#78ff1b 177px,#d1ff18 207px,#fffe16 220px,#ffc10f 240px,#ff8b09 266px,#ff5c04 302px,#ff3400 355px,#ff2600 384px)"></i><i style="left:0px;top:44px;width:401px;background:linear-gradient(90deg,#00ff2b 0px,#03ff24 116px,#2fff22 145px,#78ff1f 177px,#d2ff1c 207px,#fffe1b 220px,#ffc012 240px,#ff8a0b 266px,#ff5c05 302px,#ff3301 355px,#ff1e00 401px)"></i><i style="left:0px;top:46px;width:419px;background:linear-gradient(90deg,#00ff2e 0px,#02ff28 116px,#2fff26 145px,#78ff23 177px,#d2ff21 207px,#fffd1f 220px,#ffc216 239px,#ff8b0e 265px,#ff5c07 301px,#ff3402 353px,#ff1800 419px)"></i><i style="left:0px;top:48px;width:436px;background:linear-gradient(90deg,#00ff31 0px,#03ff2c 117px,#30ff2a 146px,#7aff28 178px,#d6ff25 208px,#fffc24 220px,#ffc11a 239px,#ff8b11 265px,#ff5b09 301px,#ff3303 353px,#ff1300 434px,#ff1300 436px)"></i><i style="left:0px;top:50px;width:453px;background:linear-gradient(90deg,#00ff34 0px,#02ff2f 117px,#2eff2e 145px,#77ff2c 177px,#cfff2a 206px,#ffff29 219px,#ffc01e 239px,#ff8a14 265px,#ff5a0b 301px,#ff3305 353px,#ff1300 434px,#ff0e00 453px)"></i><i style="left:0px;top:52px;width:471px;background:linear-gradient(90deg,#00ff37 0px,#03ff33 118px,#2fff32 146px,#7aff30 178px,#d3ff2f 207px,#ffff2e 219px,#ffc222 238px,#ff8c17 263px,#ff5d0e 298px,#ff3406 349px,#ff1401 428px,#ff0a00 471px)"></i><i style="left:0px;top:54px;width:488px;background:linear-gradient(90deg,#00ff3a 0px,#02ff37 118px,#2fff36 146px,#77ff35 177px,#d0ff34 206px,#fffe33 219px,#ffc126 238px,#ff8c1a 263px,#ff5c10 298px,#ff3408 349px,#ff1402 428px,#ff0700 488px)"></i><i style="left:0px;top:56px;width:506px;background:linear-gradient(90deg,#00ff3e 0px,#03ff3b 119px,#30ff3b 147px,#79ff3a 178px,#d4ff39 207px,#fffd38 219px,#ffc02a 238px,#ff8b1e 263px,#ff5b13 298px,#ff330a 349px,#ff1303 428px,#ff0400 506px)"></i><i style="left:0px;top:58px;width:523px;background:linear-gradient(90deg,#00ff41 0px,#02ff40 119px,#30ff3f 147px,#79ff3f 178px,#d4ff3e 207px,#fffc3d 219px,#ffbf2e 238px,#ff8a21 263px,#ff5b15 298px,#ff330b 349px,#ff1304 428px,#ff0100 523px)"></i><i style="left:1px;top:60px;width:540px;background:linear-gradient(90deg,#00ff44 0px,#03ff44 119px,#31ff44 147px,#7cff44 178px,#d5ff44 206px,#fffc43 218px,#ffbf32 237px,#ff8924 262px,#ff5a18 297px,#ff320d 348px,#ff1205 427px,#ff0000 540px)"></i><i style="left:1px;top:62px;width:557px;background:linear-gradient(90deg,#00ff48 0px,#03ff49 119px,#2eff49 146px,#79ff49 177px,#d2ff49 205px,#ffff49 217px,#ffc338 235px,#ff8e29 259px,#ff5d1b 293px,#ff3510 342px,#ff1406 418px,#ff0000 533px,#ff0000 557px)"></i><i style="left:1px;top:64px;width:574px;background:linear-gradient(90deg,#00ff4b 0px,#02ff4d 119px,#2eff4e 146px,#76ff4e 176px,#ceff4f 204px,#fffe4f 217px,#ffc23d 235px,#ff8d2d 259px,#ff5d1e 293px,#ff3412 342px,#ff1408 418px,#ff0001 532px,#ff0000 574px)"></i><i style="left:1px;top:66px;width:592px;background:linear-gradient(90deg,#00ff4f 0px,#03ff52 120px,#2fff53 147px,#78ff54 177px,#d2ff55 205px,#fffd55 217px,#ffc142 235px,#ff8c30 259px,#ff5c21 293px,#ff3414 342px,#ff1409 418px,#ff0002 530px,#ff0000 592px)"></i><i style="left:2px;top:68px;width:608px;background:linear-gradient(90deg,#00ff53 0px,#02ff56 119px,#2dff58 145px,#75ff59 175px,#cfff5b 203px,#fffd5b 216px,#ffc146 234px,#ff8b34 258px,#ff5b24 292px,#ff3316 341px,#ff130a 417px,#ff0002 528px,#ff0000 608px)"></i><i style="left:2px;top:70px;width:625px;background:linear-gradient(90deg,#00ff56 0px,#03ff5b 120px,#30ff5d 147px,#7bff5f 177px,#d3ff61 204px,#fffc61 216px,#ffc04b 234px,#ff8a38 258px,#ff5a26 292px,#ff3318 341px,#ff130b 417px,#ff0003 527px,#ff0000 625px)"></i><i style="left:2px;top:72px;width:643px;background:linear-gradient(90deg,#00ff5a 0px,#02ff60 120px,#2eff62 146px,#78ff65 176px,#d0ff68 203px,#ffff69 215px,#ffc251 233px,#ff8b3c 257px,#ff5c2a 290px,#ff341a 338px,#ff140d 412px,#ff0004 522px,#ff0000 643px)"></i><i style="left:3px;top:74px;width:646px;background:linear-gradient(90deg,#00ff5e 0px,#03ff65 120px,#2fff68 146px,#77ff6b 175px,#d0ff6e 202px,#fffe6f 214px,#ffc157 232px,#ff8a40 256px,#ff5b2d 289px,#ff331c 337px,#ff130f 411px,#ff0005 520px,#ff0000 646px)"></i><i style="left:3px;top:76px;width:646px;background:linear-gradient(90deg,#00ff62 0px,#02ff6b 120px,#2fff6d 146px,#77ff71 175px,#d1ff75 202px,#fffe76 214px,#ffc05c 232px,#ff8944 256px,#ff5a30 289px,#ff321f 337px,#ff1210 412px,#ff0006 520px,#ff0001 646px)"></i><i style="left:3px;top:78px;width:646px;background:linear-gradient(90deg,#00ff66 0px,#03ff70 121px,#30ff73 147px,#7aff77 176px,#d5ff7c 203px,#fffd7d 214px,#ffc262 231px,#ff8c4a 254px,#ff5d35 286px,#ff3422 333px,#ff1413 405px,#ff0007 514px,#ff0001 646px)"></i><i style="left:4px;top:80px;width:645px;background:linear-gradient(90deg,#00ff6a 0px,#02ff75 120px,#2fff79 146px,#7aff7e 175px,#d5ff83 202px,#fffc84 213px,#ffc168 230px,#ff8b4e 253px,#ff5c38 285px,#ff3424 332px,#ff1414 404px,#ff0008 511px,#ff0002 645px)"></i><i style="left:4px;top:82px;width:645px;background:linear-gradient(90deg,#00ff6e 0px,#03ff7b 121px,#31ff7f 147px,#7cff84 176px,#d6ff8a 202px,#ffff8c 212px,#ffc06d 230px,#ff8a53 253px,#ff5b3b 285px,#ff3327 332px,#ff1316 404px,#ff0009 510px,#ff0002 645px)"></i><i style="left:5px;top:84px;width:644px;background:linear-gradient(90deg,#00ff72 0px,#03ff81 120px,#2eff85 145px,#76ff8b 173px,#ceff91 199px,#ffff94 211px,#ffc275 228px,#ff8b58 251px,#ff5c3f 283px,#ff342a 329px,#ff1418 400px,#ff000b 506px,#ff0003 644px)"></i><i style="left:5px;top:86px;width:644px;background:linear-gradient(90deg,#00ff76 0px,#02ff86 120px,#2eff8b 145px,#76ff91 173px,#cfff98 199px,#fffe9b 211px,#ffc17a 228px,#ff8a5d 251px,#ff5b42 283px,#ff332c 329px,#ff1319 400px,#ff000c 505px,#ff0004 644px)"></i><i style="left:6px;top:88px;width:643px;background:linear-gradient(90deg,#00ff7b 0px,#03ff8c 120px,#2fff92 145px,#79ff99 173px,#d3ffa0 199px,#fffda3 210px,#ffc080 227px,#ff8a61 250px,#ff5a46 282px,#ff322e 328px,#ff121b 400px,#ff000d 503px,#ff0004 643px)"></i><i style="left:6px;top:90px;width:643px;background:linear-gradient(90deg,#00ff7f 0px,#02ff92 120px,#2cff98 144px,#75ff9f 172px,#d0ffa8 198px,#fffcaa 210px,#ffbf86 227px,#ff8966 250px,#ff5949 282px,#ff3231 328px,#ff121c 400px,#ff000e 502px,#ff0005 643px)"></i><i style="left:7px;top:92px;width:642px;background:linear-gradient(90deg,#00ff83 0px,#03ff99 120px,#30ff9f 145px,#7bffa7 173px,#d4ffb0 198px,#feffb4 208px,#ffbe8d 226px,#ff8a6c 248px,#ff5b4e 279px,#ff3335 324px,#ff131f 394px,#ff0010 496px,#ff0005 642px)"></i><i style="left:7px;top:94px;width:642px;background:linear-gradient(90deg,#00ff88 0px,#02ff9f 120px,#2dffa5 144px,#75ffae 171px,#ccffb8 196px,#ffffbd 208px,#ffc397 224px,#ff8d73 246px,#ff5d54 276px,#ff3539 320px,#ff1422 388px,#ff0011 491px,#ff0006 642px)"></i><i style="left:8px;top:96px;width:641px;background:linear-gradient(90deg,#00ff8d 0px,#03ffa5 120px,#2fffad 144px,#78ffb6 171px,#d1ffc0 196px,#fffec5 207px,#ffc39d 223px,#ff8c78 245px,#ff5d58 275px,#ff343c 319px,#ff1424 387px,#ff0013 489px,#ff0007 641px)"></i><i style="left:8px;top:98px;width:641px;background:linear-gradient(90deg,#00ff91 0px,#02ffac 120px,#2effb4 144px,#77ffbe 171px,#d1ffc9 196px,#fffdcd 207px,#ffc2a4 223px,#ff8b7d 245px,#ff5c5c 275px,#ff343f 319px,#ff1326 387px,#ff0014 487px,#ff0008 641px)"></i><i style="left:9px;top:100px;width:640px;background:linear-gradient(90deg,#00ff96 0px,#03ffb3 120px,#30ffbb 144px,#7affc6 171px,#d6ffd2 196px,#fffcd6 206px,#ffc1aa 222px,#ff8a82 244px,#ff5b60 274px,#ff3341 318px,#ff1328 386px,#ff0015 485px,#ff0008 640px)"></i><i style="left:10px;top:102px;width:639px;background:linear-gradient(90deg,#00ff9b 0px,#02ffba 119px,#2fffc2 143px,#7affce 170px,#d2ffdb 194px,#feffe1 204px,#ffc0b1 221px,#ff8988 243px,#ff5a64 273px,#ff3244 317px,#ff122a 385px,#ff0017 483px,#ff0009 639px)"></i><i style="left:10px;top:104px;width:639px;background:linear-gradient(90deg,#00ffa0 0px,#02ffc0 119px,#2cffca 142px,#74ffd6 168px,#caffe3 192px,#ffffea 204px,#ffc2bb 220px,#ff8c90 241px,#ff5d6b 270px,#ff354a 312px,#ff152e 377px,#ff0019 476px,#ff000a 639px)"></i><i style="left:11px;top:106px;width:636px;background:linear-gradient(90deg,#00ffa5 0px,#03ffc8 119px,#2effd2 142px,#76ffdf 168px,#cfffed 192px,#fffef4 203px,#ffc1c2 219px,#ff8b96 240px,#ff5c6f 269px,#ff344d 311px,#ff1430 376px,#ff001a 474px,#ff000b 636px)"></i><i style="left:11px;top:108px;width:634px;background:linear-gradient(90deg,#00ffaa 0px,#02ffcf 119px,#2dffd9 142px,#76ffe7 168px,#cffff6 192px,#fffdfd 203px,#ffc0c9 219px,#ff8a9b 240px,#ff5b73 269px,#ff3350 311px,#ff1332 376px,#ff001c 473px,#ff000b 634px)"></i><i style="left:12px;top:110px;width:631px;background:linear-gradient(90deg,#00ffaf 0px,#01ffd6 118px,#2affe1 140px,#73ffef 166px,#dafcff 194px,#fff3fe 204px,#ffb9cb 220px,#ff839c 242px,#ff5573 272px,#ff2e4e 317px,#ff0f30 387px,#ff001c 478px,#ff000c 631px)"></i><i style="left:13px;top:112px;width:628px;background:linear-gradient(90deg,#00ffb5 0px,#00ffdd 115px,#18ffe5 131px,#57fff3 156px,#a5fbff 180px,#fee9ff 205px,#ffacc8 223px,#ff7999 246px,#ff4c6e 279px,#ff264a 328px,#ff0a2d 405px,#ff001c 488px,#ff000d 628px)"></i><i style="left:13px;top:114px;width:626px;background:linear-gradient(90deg,#00ffba 0px,#00ffe3 112px,#06ffe7 121px,#38fff5 145px,#77fbff 167px,#eee2ff 203px,#ffddfd 208px,#ffa3c7 226px,#ff7197 250px,#ff466d 284px,#ff2249 335px,#ff072b 416px,#ff001c 497px,#ff000e 626px)"></i><i style="left:14px;top:116px;width:623px;background:linear-gradient(90deg,#00ffc0 0px,#00ffe9 109px,#03ffef 119px,#32fffc 142px,#97eaff 178px,#ffd4fe 209px,#ff9dc9 227px,#ff6b98 252px,#ff406c 288px,#ff1d48 342px,#ff042a 428px,#ff0016 545px,#ff000f 623px)"></i><i style="left:15px;top:118px;width:620px;background:linear-gradient(90deg,#00ffc5 0px,#00fff0 106px,#04fff7 119px,#2cfbff 139px,#88e4ff 174px,#ffc8fc 211px,#ff92c6 230px,#ff6194 257px,#ff3868 296px,#ff1744 355px,#ff0127 447px,#ff0010 620px)"></i><i style="left:15px;top:120px;width:618px;background:linear-gradient(90deg,#00ffcb 0px,#00fff6 103px,#04ffff 119px,#3aeeff 146px,#9bd7ff 182px,#ffc0fe 213px,#ff8ac5 233px,#ff5c94 260px,#ff3569 299px,#ff1544 359px,#ff0027 452px,#ff0011 618px)"></i><i style="left:16px;top:122px;width:615px;background:linear-gradient(90deg,#00ffd1 0px,#00fffd 101px,#03f7ff 118px,#37e6ff 145px,#99cfff 182px,#ffb9ff 214px,#ff85c7 234px,#ff5794 262px,#ff3169 302px,#ff1344 363px,#ff0028 454px,#ff0012 615px)"></i><i style="left:17px;top:124px;width:612px;background:linear-gradient(90deg,#00ffd7 0px,#00fcff 95px,#04efff 118px,#39deff 146px,#9dc5ff 184px,#ffaefd 216px,#ff7cc4 237px,#ff5092 266px,#ff2c67 308px,#ff0f42 372px,#ff0029 458px,#ff0013 612px)"></i><i style="left:17px;top:126px;width:610px;background:linear-gradient(90deg,#00ffdd 0px,#00fcff 81px,#03e7ff 118px,#37d7ff 146px,#98bfff 184px,#ffa7fe 218px,#ff77c6 239px,#ff4d94 268px,#ff2a68 310px,#ff0e44 374px,#ff002a 458px,#ff0014 610px)"></i><i style="left:18px;top:128px;width:608px;background:linear-gradient(90deg,#00ffe3 0px,#00fcff 67px,#02e0ff 117px,#35d0ff 145px,#96b8ff 184px,#ffa1ff 219px,#ff73c7 240px,#ff4a95 269px,#ff286a 311px,#ff0d45 375px,#ff002c 457px,#ff0015 608px)"></i><i style="left:19px;top:130px;width:605px;background:linear-gradient(90deg,#00ffe9 0px,#00fcff 53px,#03d9ff 117px,#37c8ff 146px,#99b0ff 186px,#ff98fd 221px,#ff6bc5 243px,#ff4493 273px,#ff2368 317px,#ff0943 384px,#ff002c 461px,#ff0016 605px)"></i><i style="left:20px;top:132px;width:602px;background:linear-gradient(90deg,#00fff0 0px,#00fcff 39px,#02d2ff 116px,#35c2ff 145px,#94aaff 185px,#ff92fe 222px,#ff66c6 244px,#ff4195 274px,#ff2169 318px,#ff0944 385px,#ff002d 460px,#ff0018 602px)"></i><i style="left:20px;top:134px;width:600px;background:linear-gradient(90deg,#00fff6 0px,#00faff 28px,#03ccff 117px,#37bbff 147px,#98a2ff 188px,#ff8afc 225px,#ff5fc4 248px,#ff3b91 280px,#ff1c66 326px,#ff0542 397px,#ff002b 477px,#ff0019 600px)"></i><i style="left:21px;top:136px;width:597px;background:linear-gradient(90deg,#00fffd 0px,#02c6ff 116px,#35b5ff 146px,#969cff 188px,#ff84fd 226px,#ff5bc5 249px,#ff3893 281px,#ff1b68 327px,#ff0543 398px,#ff002a 488px,#ff001a 597px)"></i><i style="left:22px;top:138px;width:594px;background:linear-gradient(90deg,#00faff 0px,#03c0ff 116px,#37aeff 147px,#9696ff 189px,#ff7ffe 227px,#ff58c7 250px,#ff3695 282px,#ff1969 328px,#ff0444 399px,#ff0026 517px,#ff001b 594px)"></i><i style="left:23px;top:140px;width:591px;background:linear-gradient(90deg,#00f4ff 0px,#02baff 115px,#35a9ff 146px,#9591ff 189px,#ff77fd 229px,#ff51c4 253px,#ff3193 286px,#ff1667 334px,#ff0242 408px,#ff0024 532px,#ff001c 591px)"></i><i style="left:23px;top:142px;width:589px;background:linear-gradient(90deg,#00eeff 0px,#03b4ff 116px,#36a3ff 148px,#988aff 192px,#ff73fe 231px,#ff4ec6 255px,#ff2e94 288px,#ff1469 336px,#ff0143 410px,#ff0025 533px,#ff001d 589px)"></i><i style="left:24px;top:144px;width:586px;background:linear-gradient(90deg,#00e7ff 0px,#02afff 115px,#349eff 147px,#9486ff 191px,#ff6eff 232px,#ff4bc7 256px,#ff2c96 289px,#ff136a 337px,#ff0145 411px,#ff0026 534px,#ff001f 586px)"></i><i style="left:25px;top:146px;width:583px;background:linear-gradient(90deg,#00e2ff 0px,#03aaff 115px,#3698ff 148px,#9780ff 193px,#ff67fd 234px,#ff45c5 259px,#ff2792 294px,#ff0f67 344px,#ff0043 421px,#ff0025 550px,#ff0020 583px)"></i><i style="left:26px;top:148px;width:580px;background:linear-gradient(90deg,#00dcff 0px,#03a5ff 115px,#3893ff 149px,#9a7aff 195px,#ff63fe 235px,#ff42c6 260px,#ff2594 295px,#ff0e69 345px,#ff0044 422px,#ff0025 551px,#ff0021 580px)"></i><i style="left:26px;top:150px;width:578px;background:linear-gradient(90deg,#00d7ff 0px,#03a0ff 115px,#368fff 149px,#9875ff 196px,#ff5dfc 238px,#ff3dc4 264px,#ff2292 300px,#ff0b67 352px,#ff0044 425px,#ff0026 554px,#ff0023 578px)"></i><i style="left:27px;top:152px;width:575px;background:linear-gradient(90deg,#00d1ff 0px,#039bff 115px,#3889ff 150px,#9b70ff 198px,#ff59fd 239px,#ff3ac5 265px,#ff2093 301px,#ff0a68 353px,#ff0046 424px,#ff0028 551px,#ff0024 575px)"></i><i style="left:28px;top:154px;width:572px;background:linear-gradient(90deg,#00ccff 0px,#0297ff 114px,#3685ff 149px,#976dff 197px,#ff55fe 240px,#ff37c7 266px,#ff1e95 302px,#ff0969 354px,#ff0048 423px,#ff0029 548px,#ff0025 572px)"></i><i style="left:29px;top:156px;width:569px;background:linear-gradient(90deg,#00c7ff 0px,#0392ff 114px,#3881ff 150px,#9a68ff 199px,#ff50fc 242px,#ff33c4 269px,#ff1a93 306px,#ff0768 360px,#ff0048 427px,#ff0029 554px,#ff0027 569px)"></i><i style="left:30px;top:158px;width:566px;background:linear-gradient(90deg,#00c2ff 0px,#028eff 113px,#367dff 149px,#9864ff 199px,#ff4cfd 243px,#ff30c6 270px,#ff1893 308px,#ff0668 363px,#ff0047 434px,#ff0028 565px,#ff0028 566px)"></i><i style="left:30px;top:160px;width:564px;background:linear-gradient(90deg,#00bdff 0px,#038aff 114px,#3878ff 151px,#995fff 201px,#ff49fe 245px,#ff2dc5 273px,#ff1694 311px,#ff0468 366px,#ff0043 451px,#ff0029 564px)"></i><i style="left:31px;top:162px;width:561px;background:linear-gradient(90deg,#00b9ff 0px,#0286ff 113px,#3675ff 150px,#975cff 201px,#ff44fd 247px,#ff2ac5 275px,#ff1493 314px,#ff0368 370px,#ff0043 456px,#ff002b 561px)"></i><i style="left:32px;top:164px;width:558px;background:linear-gradient(90deg,#00b4ff 0px,#0382ff 113px,#3771ff 151px,#9a58ff 203px,#ff41fe 248px,#ff28c6 276px,#ff1294 315px,#ff0269 371px,#ff0044 457px,#ff002c 558px)"></i><i style="left:33px;top:166px;width:556px;background:linear-gradient(90deg,#00b0ff 0px,#027fff 112px,#366dff 150px,#9655ff 202px,#ff3dfc 250px,#ff24c4 279px,#ff1092 319px,#ff0167 377px,#ff0043 466px,#ff002e 556px)"></i><i style="left:34px;top:168px;width:553px;background:linear-gradient(90deg,#00abff 0px,#037bff 112px,#3769ff 151px,#9951ff 204px,#ff39fd 251px,#ff22c5 280px,#ff0e94 320px,#ff0068 378px,#ff0043 467px,#ff002f 553px)"></i><i style="left:35px;top:170px;width:550px;background:linear-gradient(90deg,#00a7ff 0px,#0278ff 111px,#3666ff 150px,#974dff 204px,#ff36fe 252px,#ff1fc5 282px,#ff0c93 323px,#ff0068 382px,#ff0043 473px,#ff0031 550px)"></i><i style="left:35px;top:172px;width:548px;background:linear-gradient(90deg,#00a4ff 0px,#0374ff 112px,#3763ff 152px,#9a4aff 207px,#ff33fc 255px,#ff1dc4 285px,#ff0a92 327px,#ff0067 388px,#ff0042 481px,#ff0032 548px)"></i><i style="left:36px;top:174px;width:545px;background:linear-gradient(90deg,#00a0ff 0px,#0271ff 111px,#3660ff 151px,#9647ff 206px,#ff30fd 256px,#ff1bc6 286px,#ff0994 328px,#ff0068 389px,#ff0043 482px,#ff0034 545px)"></i><i style="left:37px;top:176px;width:542px;background:linear-gradient(90deg,#009cff 0px,#036eff 111px,#375cff 152px,#9943ff 208px,#ff2dfe 257px,#ff18c5 288px,#ff0893 331px,#ff0068 392px,#ff0043 487px,#ff0036 542px)"></i><i style="left:38px;top:178px;width:539px;background:linear-gradient(90deg,#0098ff 0px,#026bff 110px,#355aff 151px,#9741ff 208px,#ff2afd 259px,#ff16c5 290px,#ff0693 333px,#ff0068 394px,#ff0044 489px,#ff0037 539px)"></i><i style="left:39px;top:180px;width:536px;background:linear-gradient(90deg,#0094ff 0px,#0368ff 110px,#3756ff 152px,#983eff 209px,#ff27fd 260px,#ff14c5 292px,#ff0593 336px,#ff0067 400px,#ff0042 498px,#ff0039 536px)"></i><i style="left:40px;top:182px;width:533px;background:linear-gradient(90deg,#0091ff 0px,#0365ff 110px,#3853ff 153px,#9a3aff 211px,#ff24fc 262px,#ff12c4 294px,#ff0393 338px,#ff0067 402px,#ff0043 501px,#ff003b 533px)"></i><i style="left:41px;top:184px;width:530px;background:linear-gradient(90deg,#008dff 0px,#0362ff 109px,#3751ff 152px,#9938ff 211px,#ff22fd 263px,#ff10c5 295px,#ff0293 340px,#ff0068 405px,#ff0043 505px,#ff003c 530px)"></i><i style="left:42px;top:186px;width:527px;background:linear-gradient(90deg,#008aff 0px,#0360ff 109px,#384eff 153px,#9b35ff 213px,#ff20fe 264px,#ff0ec5 297px,#ff0193 342px,#ff0068 407px,#ff0043 507px,#ff003e 527px)"></i><i style="left:43px;top:188px;width:524px;background:linear-gradient(90deg,#0087ff 0px,#035dff 108px,#374bff 152px,#9833ff 212px,#ff1dfc 266px,#ff0dc5 299px,#ff0093 345px,#ff0067 412px,#ff0042 515px,#ff0040 524px)"></i><i style="left:43px;top:190px;width:522px;background:linear-gradient(90deg,#0084ff 0px,#035aff 109px,#3849ff 154px,#9a30ff 215px,#ff1bfd 268px,#ff0bc4 302px,#ff0092 349px,#ff0067 417px,#ff0042 522px)"></i><i style="left:44px;top:192px;width:519px;background:linear-gradient(90deg,#0081ff 0px,#0358ff 108px,#3747ff 153px,#992eff 215px,#ff19fe 269px,#ff09c5 303px,#ff0093 350px,#ff0068 418px,#ff0044 519px)"></i><i style="left:45px;top:194px;width:516px;background:linear-gradient(90deg,#007eff 0px,#0355ff 108px,#3844ff 154px,#9b2bff 217px,#ff16fd 271px,#ff08c4 306px,#ff0092 354px,#ff0066 424px,#ff0046 516px)"></i><i style="left:46px;top:196px;width:513px;background:linear-gradient(90deg,#007bff 0px,#0353ff 107px,#3742ff 153px,#982aff 216px,#ff14fd 272px,#ff06c5 307px,#ff0093 355px,#ff0067 425px,#ff0047 513px)"></i><i style="left:47px;top:198px;width:510px;background:linear-gradient(90deg,#0078ff 0px,#0351ff 107px,#383fff 154px,#9a27ff 218px,#ff12fc 274px,#ff05c4 309px,#ff0092 358px,#ff0067 429px,#ff0049 510px)"></i><i style="left:48px;top:200px;width:507px;background:linear-gradient(90deg,#0075ff 0px,#034fff 106px,#363dff 153px,#9925ff 218px,#ff10fd 275px,#ff04c4 311px,#ff0093 360px,#ff0067 431px,#ff004b 507px)"></i><i style="left:49px;top:202px;width:505px;background:linear-gradient(90deg,#0072ff 0px,#034cff 106px,#383bff 154px,#9923ff 219px,#ff0ffd 276px,#ff03c5 312px,#ff0093 362px,#ff0067 434px,#ff004d 505px)"></i><i style="left:50px;top:204px;width:502px;background:linear-gradient(90deg,#006fff 0px,#024aff 105px,#3639ff 153px,#9821ff 219px,#ff0dfc 278px,#ff01c3 315px,#ff0091 366px,#ff0066 440px,#ff004f 502px)"></i><i style="left:51px;top:206px;width:499px;background:linear-gradient(90deg,#006dff 0px,#0348ff 105px,#3837ff 154px,#9a1fff 221px,#ff0bfd 279px,#ff01c4 316px,#ff0092 367px,#ff0067 441px,#ff0051 499px)"></i><i style="left:52px;top:208px;width:496px;background:linear-gradient(90deg,#006aff 0px,#0246ff 104px,#3635ff 153px,#971eff 220px,#ff0afe 280px,#ff00c5 317px,#ff0093 368px,#ff0068 442px,#ff0053 496px)"></i><i style="left:53px;top:210px;width:493px;background:linear-gradient(90deg,#0068ff 0px,#0344ff 104px,#3733ff 154px,#991bff 222px,#ff08fc 282px,#ff00c4 320px,#ff0092 372px,#ff0067 448px,#ff0056 493px)"></i><i style="left:54px;top:212px;width:490px;background:linear-gradient(90deg,#0065ff 0px,#0342ff 104px,#3931ff 155px,#9b19ff 224px,#ff07fd 283px,#ff00c5 321px,#ff0092 374px,#ff0067 450px,#ff0058 490px)"></i><i style="left:55px;top:214px;width:487px;background:linear-gradient(90deg,#0063ff 0px,#0341ff 103px,#372fff 154px,#9a18ff 224px,#ff05fc 285px,#ff00c3 324px,#ff0091 378px,#ff0066 456px,#ff005a 487px)"></i><i style="left:56px;top:216px;width:484px;background:linear-gradient(90deg,#0060ff 0px,#033fff 103px,#392dff 155px,#9a16ff 225px,#ff04fd 286px,#ff00c4 325px,#ff0092 379px,#ff0067 457px,#ff005c 484px)"></i><i style="left:57px;top:218px;width:481px;background:linear-gradient(90deg,#005eff 0px,#033dff 102px,#372cff 154px,#9915ff 225px,#ff03fd 287px,#ff00c5 326px,#ff0093 380px,#ff0068 458px,#ff005f 481px)"></i><i style="left:58px;top:220px;width:478px;background:linear-gradient(90deg,#005cff 0px,#033bff 102px,#382aff 155px,#9b13ff 227px,#ff01fc 289px,#ff00c4 329px,#ff0092 384px,#ff0066 464px,#ff0061 478px)"></i><i style="left:59px;top:222px;width:475px;background:linear-gradient(90deg,#005aff 0px,#033aff 101px,#3728ff 154px,#9812ff 226px,#ff01fd 290px,#ff00c4 330px,#ff0093 385px,#ff0067 465px,#ff0063 475px)"></i><i style="left:60px;top:224px;width:472px;background:linear-gradient(90deg,#0058ff 0px,#0338ff 101px,#3827ff 155px,#9a10ff 228px,#ff00fe 291px,#ff00c5 331px,#ff0093 387px,#ff0067 468px,#ff0066 472px)"></i><i style="left:61px;top:226px;width:469px;background:linear-gradient(90deg,#0055ff 0px,#0336ff 100px,#3725ff 154px,#990fff 228px,#ff00fc 293px,#ff00c4 334px,#ff0092 391px,#ff0068 469px)"></i><i style="left:62px;top:228px;width:466px;background:linear-gradient(90deg,#0053ff 0px,#0335ff 100px,#3823ff 155px,#9b0dff 230px,#ff00fd 294px,#ff00c5 335px,#ff0093 392px,#ff006b 466px)"></i><i style="left:63px;top:230px;width:463px;background:linear-gradient(90deg,#0051ff 0px,#0333ff 99px,#3722ff 154px,#980cff 229px,#ff00fc 296px,#ff00c3 338px,#ff0092 396px,#ff006d 463px)"></i><i style="left:64px;top:232px;width:460px;background:linear-gradient(90deg,#004fff 0px,#0332ff 99px,#3821ff 155px,#9a0bff 231px,#fe00ff 295px,#ff00c3 340px,#ff0091 399px,#ff0070 460px)"></i><i style="left:66px;top:234px;width:456px;background:linear-gradient(90deg,#004dff 0px,#0330ff 97px,#3720ff 153px,#990aff 230px,#f800ff 292px,#ff00fa 299px,#ff00c2 342px,#ff0090 402px,#ff0072 456px)"></i><i style="left:67px;top:236px;width:453px;background:linear-gradient(90deg,#004bff 0px,#032fff 97px,#381eff 154px,#9b08ff 232px,#f500ff 291px,#ff00fb 300px,#ff00c3 343px,#ff0091 403px,#ff0075 453px)"></i><i style="left:68px;top:238px;width:450px;background:linear-gradient(90deg,#004aff 0px,#032dff 96px,#371dff 153px,#9808ff 231px,#f100ff 290px,#ff00fb 301px,#ff00c2 345px,#ff0091 405px,#ff0078 450px)"></i><i style="left:69px;top:240px;width:448px;background:linear-gradient(90deg,#0048ff 0px,#032cff 96px,#381bff 154px,#9a06ff 233px,#f200ff 292px,#ff00fc 302px,#ff00c3 346px,#ff0091 407px,#ff007a 448px)"></i><i style="left:70px;top:242px;width:445px;background:linear-gradient(90deg,#0046ff 0px,#032aff 96px,#391aff 155px,#9c05ff 235px,#fd00ff 300px,#ff00bf 352px,#ff008e 415px,#ff007d 445px)"></i><i style="left:71px;top:244px;width:442px;background:linear-gradient(90deg,#0044ff 0px,#0329ff 95px,#3819ff 154px,#9a04ff 234px,#ff00fd 304px,#ff00c5 348px,#ff0093 409px,#ff0080 442px)"></i><i style="left:72px;top:246px;width:439px;background:linear-gradient(90deg,#0043ff 0px,#0328ff 95px,#3917ff 155px,#9b03ff 236px,#ff00fc 306px,#ff00c4 351px,#ff0092 413px,#ff0083 439px)"></i><i style="left:73px;top:248px;width:436px;background:linear-gradient(90deg,#0041ff 0px,#0327ff 94px,#3816ff 154px,#9a02ff 236px,#ff00fd 307px,#ff00c4 352px,#ff0093 414px,#ff0086 436px)"></i><i style="left:74px;top:250px;width:433px;background:linear-gradient(90deg,#003fff 0px,#0325ff 94px,#3915ff 155px,#9c01ff 238px,#ff00fd 308px,#ff00c5 353px,#ff0093 416px,#ff0089 433px)"></i><i style="left:76px;top:252px;width:429px;background:linear-gradient(90deg,#003dff 0px,#0324ff 92px,#3814ff 153px,#9a01ff 236px,#ff00fc 309px,#ff00c4 355px,#ff0092 419px,#ff008c 429px)"></i><i style="left:77px;top:254px;width:426px;background:linear-gradient(90deg,#003cff 0px,#0323ff 92px,#3913ff 154px,#9b00ff 238px,#ff00fd 310px,#ff00c5 356px,#ff0093 420px,#ff008f 426px)"></i><i style="left:78px;top:256px;width:423px;background:linear-gradient(90deg,#003aff 0px,#0322ff 91px,#3712ff 153px,#9a00ff 238px,#ff00fd 311px,#ff00c4 358px,#ff0092 423px)"></i><i style="left:79px;top:258px;width:420px;background:linear-gradient(90deg,#0039ff 0px,#0321ff 91px,#3811ff 154px,#9a00ff 239px,#ff00fc 313px,#ff00c4 360px,#ff0095 420px)"></i><i style="left:80px;top:260px;width:417px;background:linear-gradient(90deg,#0037ff 0px,#0320ff 90px,#3710ff 153px,#9a00ff 239px,#ff00fd 314px,#ff00c5 361px,#ff0099 417px)"></i><i style="left:81px;top:262px;width:414px;background:linear-gradient(90deg,#0036ff 0px,#031fff 90px,#380fff 154px,#9b00ff 241px,#ff00fc 316px,#ff00c4 364px,#ff009c 414px)"></i><i style="left:82px;top:264px;width:411px;background:linear-gradient(90deg,#0034ff 0px,#031eff 89px,#370eff 153px,#9900ff 240px,#ff00fd 317px,#ff00c4 365px,#ff00a0 411px)"></i><i style="left:84px;top:266px;width:407px;background:linear-gradient(90deg,#0033ff 0px,#031dff 88px,#380dff 153px,#9500ff 237px,#ff00fd 317px,#ff00c4 366px,#ff00a3 407px)"></i><i style="left:85px;top:268px;width:404px;background:linear-gradient(90deg,#0031ff 0px,#031cff 87px,#370cff 152px,#9200ff 235px,#ff00fc 319px,#ff00c4 368px,#ff00a7 404px)"></i><i style="left:86px;top:270px;width:401px;background:linear-gradient(90deg,#0030ff 0px,#031bff 87px,#380bff 153px,#8f00ff 233px,#ff00fd 320px,#ff00c4 370px,#ff00aa 401px)"></i><i style="left:87px;top:272px;width:398px;background:linear-gradient(90deg,#002fff 0px,#031aff 87px,#390aff 154px,#8c00ff 231px,#ff00fd 321px,#ff00c4 371px,#ff00ae 398px)"></i><i style="left:88px;top:274px;width:395px;background:linear-gradient(90deg,#002eff 0px,#0319ff 86px,#380aff 153px,#8900ff 229px,#ff00fc 323px,#ff00c4 373px,#ff00b2 395px)"></i><i style="left:89px;top:276px;width:392px;background:linear-gradient(90deg,#002cff 0px,#0318ff 86px,#3909ff 154px,#8700ff 228px,#ff00fd 324px,#ff00c4 375px,#ff00b6 392px)"></i><i style="left:91px;top:278px;width:389px;background:linear-gradient(90deg,#002bff 0px,#0317ff 84px,#3808ff 152px,#8400ff 225px,#ff00fc 325px,#ff00c4 376px,#ff00b9 389px)"></i><i style="left:92px;top:280px;width:386px;background:linear-gradient(90deg,#002aff 0px,#0316ff 84px,#3907ff 153px,#8300ff 225px,#fd00ff 323px,#ff00c1 381px,#ff00bd 386px)"></i><i style="left:93px;top:282px;width:383px;background:linear-gradient(90deg,#0028ff 0px,#0315ff 83px,#3807ff 152px,#8200ff 225px,#fd00ff 324px,#ff00c1 383px)"></i><i style="left:94px;top:284px;width:380px;background:linear-gradient(90deg,#0027ff 0px,#0314ff 83px,#3906ff 153px,#8500ff 228px,#ff00fc 329px,#ff00c5 380px)"></i><i style="left:95px;top:286px;width:377px;background:linear-gradient(90deg,#0026ff 0px,#0314ff 82px,#3805ff 152px,#8700ff 230px,#ff00fd 330px,#ff00c9 377px)"></i><i style="left:97px;top:288px;width:373px;background:linear-gradient(90deg,#0025ff 0px,#0313ff 81px,#3904ff 152px,#9600ff 243px,#ff00fd 330px,#ff00ce 373px)"></i><i style="left:98px;top:290px;width:370px;background:linear-gradient(90deg,#0024ff 0px,#0312ff 80px,#3804ff 151px,#9a00ff 248px,#ff00fc 332px,#ff00d2 370px)"></i><i style="left:99px;top:292px;width:367px;background:linear-gradient(90deg,#0023ff 0px,#0311ff 80px,#3903ff 152px,#9c00ff 250px,#ff00fd 333px,#ff00d6 367px)"></i><i style="left:100px;top:294px;width:364px;background:linear-gradient(90deg,#0022ff 0px,#0310ff 80px,#3902ff 153px,#9c00ff 251px,#ff00fc 335px,#ff00db 364px)"></i><i style="left:102px;top:296px;width:360px;background:linear-gradient(90deg,#0020ff 0px,#0310ff 78px,#3802ff 151px,#9b00ff 250px,#ff00fc 335px,#ff00e0 360px)"></i><i style="left:103px;top:298px;width:357px;background:linear-gradient(90deg,#001fff 0px,#030fff 78px,#3901ff 152px,#9d00ff 252px,#ff00fd 336px,#ff00e4 357px)"></i><i style="left:104px;top:300px;width:354px;background:linear-gradient(90deg,#001eff 0px,#030eff 77px,#3801ff 151px,#9b00ff 251px,#ff00fc 338px,#ff00e9 354px)"></i><i style="left:105px;top:302px;width:351px;background:linear-gradient(90deg,#001dff 0px,#030eff 77px,#3901ff 152px,#9c00ff 253px,#ff00fd 339px,#ff00ee 351px)"></i><i style="left:107px;top:304px;width:347px;background:linear-gradient(90deg,#001cff 0px,#030dff 75px,#3800ff 150px,#9b00ff 252px,#ff00fd 339px,#ff00f3 347px)"></i><i style="left:108px;top:306px;width:344px;background:linear-gradient(90deg,#001bff 0px,#030cff 75px,#3900ff 151px,#9c00ff 254px,#ff00fc 341px,#ff00f9 344px)"></i><i style="left:109px;top:308px;width:341px;background:linear-gradient(90deg,#001aff 0px,#030cff 74px,#3800ff 150px,#9b00ff 253px,#ff00fe 341px)"></i><i style="left:110px;top:310px;width:338px;background:linear-gradient(90deg,#0019ff 0px,#030bff 74px,#3900ff 151px,#9c00ff 255px,#fb00ff 338px)"></i><i style="left:112px;top:312px;width:334px;background:linear-gradient(90deg,#0018ff 0px,#030aff 72px,#3800ff 149px,#9b00ff 254px,#f500ff 334px)"></i><i style="left:113px;top:314px;width:332px;background:linear-gradient(90deg,#0017ff 0px,#030aff 72px,#3900ff 150px,#9c00ff 256px,#f200ff 332px)"></i><i style="left:114px;top:316px;width:329px;background:linear-gradient(90deg,#0017ff 0px,#0309ff 72px,#3a00ff 151px,#9d00ff 257px,#ec00ff 329px)"></i><i style="left:115px;top:318px;width:326px;background:linear-gradient(90deg,#0016ff 0px,#0309ff 71px,#3900ff 150px,#9c00ff 257px,#e700ff 326px)"></i><i style="left:117px;top:320px;width:322px;background:linear-gradient(90deg,#0015ff 0px,#0308ff 70px,#3a00ff 150px,#9d00ff 258px,#e300ff 322px)"></i><i style="left:118px;top:322px;width:319px;background:linear-gradient(90deg,#0014ff 0px,#0308ff 69px,#3900ff 149px,#9b00ff 257px,#de00ff 319px)"></i><i style="left:119px;top:324px;width:316px;background:linear-gradient(90deg,#0013ff 0px,#0307ff 69px,#3900ff 150px,#9d00ff 259px,#d900ff 316px)"></i><i style="left:121px;top:326px;width:312px;background:linear-gradient(90deg,#0012ff 0px,#0306ff 67px,#3900ff 148px,#9c00ff 258px,#d500ff 312px)"></i><i style="left:122px;top:328px;width:309px;background:linear-gradient(90deg,#0011ff 0px,#0306ff 67px,#3900ff 149px,#9d00ff 260px,#d000ff 309px)"></i><i style="left:123px;top:330px;width:306px;background:linear-gradient(90deg,#0011ff 0px,#0305ff 66px,#3900ff 148px,#9b00ff 259px,#cc00ff 306px)"></i><i style="left:125px;top:332px;width:302px;background:linear-gradient(90deg,#0010ff 0px,#0305ff 65px,#3900ff 148px,#9c00ff 260px,#c700ff 302px)"></i><i style="left:126px;top:334px;width:299px;background:linear-gradient(90deg,#000fff 0px,#0304ff 65px,#3a00ff 149px,#9e00ff 262px,#c300ff 299px)"></i><i style="left:127px;top:336px;width:296px;background:linear-gradient(90deg,#000eff 0px,#0304ff 64px,#3900ff 148px,#9c00ff 261px,#bf00ff 296px)"></i><i style="left:129px;top:338px;width:292px;background:linear-gradient(90deg,#000eff 0px,#0304ff 63px,#3a00ff 148px,#9d00ff 262px,#bb00ff 292px)"></i><i style="left:130px;top:340px;width:289px;background:linear-gradient(90deg,#000dff 0px,#0303ff 62px,#3900ff 147px,#9c00ff 262px,#b700ff 289px)"></i><i style="left:131px;top:342px;width:286px;background:linear-gradient(90deg,#000cff 0px,#0303ff 62px,#3a00ff 148px,#9e00ff 264px,#b300ff 286px)"></i><i style="left:133px;top:344px;width:282px;background:linear-gradient(90deg,#000bff 0px,#0302ff 60px,#3900ff 146px,#9c00ff 262px,#af00ff 282px)"></i><i style="left:134px;top:346px;width:279px;background:linear-gradient(90deg,#000bff 0px,#0302ff 60px,#3a00ff 147px,#9d00ff 264px,#ab00ff 279px)"></i><i style="left:136px;top:348px;width:275px;background:linear-gradient(90deg,#000aff 0px,#0402ff 59px,#3a00ff 147px,#9e00ff 265px,#a800ff 275px)"></i><i style="left:137px;top:350px;width:272px;background:linear-gradient(90deg,#0009ff 0px,#0301ff 58px,#3a00ff 146px,#9d00ff 265px,#a400ff 272px)"></i><i style="left:139px;top:352px;width:269px;background:linear-gradient(90deg,#0009ff 0px,#0401ff 57px,#3a00ff 146px,#9e00ff 265px,#a100ff 269px)"></i><i style="left:140px;top:354px;width:266px;background:linear-gradient(90deg,#0008ff 0px,#0301ff 56px,#3a00ff 145px,#9d00ff 265px,#9e00ff 266px)"></i><i style="left:141px;top:356px;width:263px;background:linear-gradient(90deg,#0008ff 0px,#0400ff 56px,#3a00ff 146px,#9a00ff 263px)"></i><i style="left:143px;top:358px;width:259px;background:linear-gradient(90deg,#0007ff 0px,#0400ff 55px,#3b00ff 146px,#9700ff 259px)"></i><i style="left:144px;top:360px;width:256px;background:linear-gradient(90deg,#0006ff 0px,#0400ff 54px,#3a00ff 145px,#9400ff 256px)"></i><i style="left:146px;top:362px;width:252px;background:linear-gradient(90deg,#0006ff 0px,#0400ff 53px,#3b00ff 145px,#9000ff 252px)"></i><i style="left:147px;top:364px;width:249px;background:linear-gradient(90deg,#0005ff 0px,#0300ff 52px,#3a00ff 144px,#8d00ff 249px)"></i><i style="left:149px;top:366px;width:245px;background:linear-gradient(90deg,#0005ff 0px,#0400ff 51px,#3b00ff 144px,#8a00ff 245px)"></i><i style="left:150px;top:368px;width:242px;background:linear-gradient(90deg,#0004ff 0px,#0300ff 50px,#3a00ff 143px,#8700ff 242px)"></i><i style="left:152px;top:370px;width:238px;background:linear-gradient(90deg,#0004ff 0px,#0400ff 49px,#3b00ff 143px,#8400ff 238px)"></i><i style="left:153px;top:372px;width:235px;background:linear-gradient(90deg,#0003ff 0px,#0400ff 49px,#3b00ff 144px,#8100ff 235px)"></i><i style="left:155px;top:374px;width:231px;background:linear-gradient(90deg,#0003ff 0px,#0400ff 47px,#3b00ff 142px,#7e00ff 231px)"></i><i style="left:156px;top:376px;width:228px;background:linear-gradient(90deg,#0002ff 0px,#0400ff 47px,#3b00ff 143px,#7b00ff 228px)"></i><i style="left:158px;top:378px;width:224px;background:linear-gradient(90deg,#0002ff 0px,#0400ff 46px,#3c00ff 143px,#7800ff 224px)"></i><i style="left:160px;top:380px;width:220px;background:linear-gradient(90deg,#0001ff 0px,#0400ff 44px,#3b00ff 141px,#7500ff 220px)"></i><i style="left:161px;top:382px;width:217px;background:linear-gradient(90deg,#0001ff 0px,#0400ff 44px,#3c00ff 142px,#7200ff 217px)"></i><i style="left:163px;top:384px;width:213px;background:linear-gradient(90deg,#0000ff 0px,#0400ff 43px,#3c00ff 142px,#7000ff 213px)"></i><i style="left:164px;top:386px;width:210px;background:linear-gradient(90deg,#0000ff 0px,#0400ff 42px,#3c00ff 141px,#6d00ff 210px)"></i><i style="left:166px;top:388px;width:206px;background:linear-gradient(90deg,#0000ff 0px,#0400ff 41px,#3c00ff 141px,#6a00ff 206px)"></i><i style="left:168px;top:390px;width:203px;background:linear-gradient(90deg,#0000ff 0px,#0400ff 40px,#3d00ff 141px,#6900ff 203px)"></i><i style="left:169px;top:392px;width:200px;background:linear-gradient(90deg,#0000ff 0px,#0400ff 40px,#3d00ff 142px,#6600ff 200px)"></i><i style="left:171px;top:394px;width:196px;background:linear-gradient(90deg,#0000ff 0px,#0500ff 39px,#3e00ff 142px,#6400ff 196px)"></i><i style="left:173px;top:396px;width:192px;background:linear-gradient(90deg,#0000ff 0px,#0500ff 38px,#3e00ff 141px,#6100ff 192px)"></i><i style="left:174px;top:398px;width:189px;background:linear-gradient(90deg,#0000ff 0px,#0500ff 37px,#3e00ff 141px,#5f00ff 189px)"></i><i style="left:176px;top:400px;width:185px;background:linear-gradient(90deg,#0000ff 0px,#0500ff 36px,#3e00ff 140px,#5c00ff 185px)"></i><i style="left:178px;top:402px;width:181px;background:linear-gradient(90deg,#0000ff 0px,#0500ff 36px,#4000ff 142px,#5a00ff 181px)"></i><i style="left:180px;top:404px;width:177px;background:linear-gradient(90deg,#0000ff 0px,#0600ff 35px,#4000ff 142px,#5800ff 177px)"></i><i style="left:181px;top:406px;width:174px;background:linear-gradient(90deg,#0000ff 0px,#0600ff 35px,#4100ff 143px,#5500ff 174px)"></i><i style="left:183px;top:408px;width:170px;background:linear-gradient(90deg,#0000ff 0px,#0600ff 35px,#4300ff 145px,#5300ff 170px)"></i><i style="left:185px;top:410px;width:166px;background:linear-gradient(90deg,#0000ff 0px,#0700ff 35px,#4400ff 146px,#5100ff 166px)"></i><i style="left:187px;top:412px;width:162px;background:linear-gradient(90deg,#0000ff 0px,#0800ff 36px,#4600ff 149px,#4f00ff 162px)"></i><i style="left:189px;top:414px;width:158px;background:linear-gradient(90deg,#0000ff 0px,#0900ff 38px,#4a00ff 154px,#4d00ff 158px)"></i><i style="left:191px;top:416px;width:154px;background:linear-gradient(90deg,#0000ff 0px,#0b00ff 41px,#4b00ff 154px)"></i><i style="left:193px;top:418px;width:150px;background:linear-gradient(90deg,#0000ff 0px,#0e00ff 46px,#4900ff 150px)"></i><i style="left:195px;top:420px;width:146px;background:linear-gradient(90deg,#0000ff 0px,#1200ff 52px,#4700ff 146px)"></i><i style="left:197px;top:422px;width:142px;background:linear-gradient(90deg,#0000ff 0px,#1600ff 60px,#4500ff 142px)"></i><i style="left:199px;top:424px;width:138px;background:linear-gradient(90deg,#0000ff 0px,#1b00ff 68px,#4300ff 138px)"></i><i style="left:201px;top:426px;width:134px;background:linear-gradient(90deg,#0000ff 0px,#2000ff 77px,#4100ff 134px)"></i><i style="left:203px;top:428px;width:131px;background:linear-gradient(90deg,#0000ff 0px,#2500ff 85px,#3f00ff 131px)"></i><i style="left:205px;top:430px;width:127px;background:linear-gradient(90deg,#0000ff 0px,#2a00ff 93px,#3e00ff 127px)"></i><i style="left:207px;top:432px;width:123px;background:linear-gradient(90deg,#0000ff 0px,#2d00ff 97px,#3c00ff 123px)"></i><i style="left:210px;top:434px;width:118px;background:linear-gradient(90deg,#0100ff 0px,#3100ff 102px,#3a00ff 118px)"></i><i style="left:212px;top:436px;width:114px;background:linear-gradient(90deg,#0100ff 0px,#3200ff 104px,#3800ff 114px)"></i><i style="left:214px;top:438px;width:110px;background:linear-gradient(90deg,#0200ff 0px,#3500ff 107px,#3600ff 110px)"></i><i style="left:217px;top:440px;width:105px;background:linear-gradient(90deg,#0300ff 0px,#3500ff 105px)"></i><i style="left:219px;top:442px;width:101px;background:linear-gradient(90deg,#0300ff 0px,#3300ff 101px)"></i><i style="left:221px;top:444px;width:97px;background:linear-gradient(90deg,#0400ff 0px,#3100ff 97px)"></i><i style="left:224px;top:446px;width:92px;background:linear-gradient(90deg,#0500ff 0px,#3000ff 92px)"></i><i style="left:226px;top:448px;width:88px;background:linear-gradient(90deg,#0500ff 0px,#2e00ff 88px)"></i><i style="left:228px;top:450px;width:84px;background:linear-gradient(90deg,#0600ff 0px,#2c00ff 84px)"></i><i style="left:231px;top:452px;width:79px;background:linear-gradient(90deg,#0600ff 0px,#2b00ff 79px)"></i><i style="left:233px;top:454px;width:75px;background:linear-gradient(90deg,#0700ff 0px,#2900ff 75px)"></i><i style="left:236px;top:456px;width:70px;background:linear-gradient(90deg,#0800ff 0px,#2800ff 70px)"></i><i style="left:238px;top:458px;width:66px;background:linear-gradient(90deg,#0800ff 0px,#2600ff 66px)"></i><i style="left:241px;top:460px;width:61px;background:linear-gradient(90deg,#0900ff 0px,#2500ff 61px)"></i><i style="left:243px;top:462px;width:57px;background:linear-gradient(90deg,#0a00ff 0px,#2300ff 57px)"></i><i style="left:245px;top:464px;width:54px;background:linear-gradient(90deg,#0a00ff 0px,#2300ff 54px)"></i><i style="left:248px;top:466px;width:49px;background:linear-gradient(90deg,#0b00ff 0px,#2100ff 49px)"></i><i style="left:250px;top:468px;width:45px;background:linear-gradient(90deg,#0c00ff 0px,#2000ff 45px)"></i><i style="left:253px;top:470px;width:40px;background:linear-gradient(90deg,#0d00ff 0px,#1e00ff 40px)"></i><i style="left:255px;top:472px;width:36px;background:linear-gradient(90deg,#0d00ff 0px,#1d00ff 36px)"></i><i style="left:257px;top:474px;width:32px;background:linear-gradient(90deg,#0e00ff 0px,#1c00ff 32px)"></i><i style="left:260px;top:476px;width:27px;background:linear-gradient(90deg,#0f00ff 0px,#1b00ff 27px)"></i><i style="left:262px;top:478px;width:23px;background:linear-gradient(90deg,#0f00ff 0px,#1900ff 23px)"></i><i style="left:265px;top:480px;width:18px;background:linear-gradient(90deg,#1000ff 0px,#1800ff 18px)"></i><i style="left:267px;top:482px;width:14px;background:linear-gradient(90deg,#1100ff 0px,#1700ff 14px)"></i><i style="left:270px;top:484px;width:9px;background:linear-gradient(90deg,#1200ff 0px,#1600ff 9px)"></i></div></div>
<svg width="1920" height="1146" viewBox="0 0 1920 1146"><defs><clipPath id="cpPlot"><rect x="1259.3" y="218.6" width="649.7" height="499.4"/></clipPath><clipPath id="cpIn"><rect x="1687.3" y="564" width="214.6" height="145.4"/></clipPath><linearGradient id="gIn" gradientUnits="userSpaceOnUse" x1="1687" y1="600" x2="1902" y2="700"><stop offset="0" stop-color="#b4ff00"/><stop offset="0.25" stop-color="#d8ff00"/><stop offset="0.5" stop-color="#ffff00"/><stop offset="0.75" stop-color="#ffd800"/><stop offset="1" stop-color="#ffb000"/></linearGradient></defs>
<path d="M1535.5,704.4 1535.5,704.4 1535.4,704.4 1535.3,704.4 1535.1,704.4 1535.0,704.4 1534.8,704.4 1534.6,704.4 1534.5,704.4 1534.3,704.4 1534.2,704.4 1534.0,704.4 1533.8,704.4 1533.6,704.4 1533.4,704.3 1533.2,704.3 1533.0,704.2 1532.8,704.1 1532.5,704.0 1532.1,703.8 1531.7,703.6 1531.2,703.3 1530.7,702.9 1530.1,702.6 1529.5,702.2 1528.9,701.7 1528.2,701.2 1527.5,700.7 1526.8,700.1 1526.0,699.5 1525.1,698.8 1524.1,698.0 1523.1,697.2 1522.0,696.4 1520.9,695.5 1519.7,694.5 1518.4,693.4 1517.1,692.3 1515.8,691.1 1514.3,689.9 1512.8,688.6 1511.3,687.3 1509.6,685.9 1507.9,684.4 1506.0,682.9 1504.1,681.3 1502.0,679.6 1499.8,677.8 1497.6,675.9 1495.2,673.9 1492.7,671.9 1490.1,669.8 1487.5,667.6 1484.7,665.3 1481.8,662.9 1478.8,660.3 1475.7,657.6 1472.5,654.8 1469.1,651.7 1465.6,648.5 1462.0,645.2 1458.3,641.6 1454.4,637.9 1450.4,633.8 1446.3,629.4 1441.8,624.6 1437.0,619.2 1431.9,613.2 1426.5,606.6 1420.8,599.6 1414.9,592.1 1408.9,584.1 1402.7,575.7 1396.3,566.8 1389.8,557.4 1383.1,547.6 1376.4,537.3 1369.5,526.5 1362.6,515.4 1355.7,504.0 1348.7,492.4 1341.8,480.6 1335.0,468.7 1328.3,456.7 1321.8,444.7 1315.6,432.6 1309.7,420.7 1304.2,409.0 1299.1,397.5 1294.2,386.2 1289.7,375.3 1285.5,364.7 1281.6,354.6 1278.1,344.8 1274.9,335.6 1272.1,326.9 1269.7,318.8 1267.5,311.1 1265.7,303.9 1264.3,297.2 1263.0,291.0 1262.1,285.2 1261.4,279.8 1261.0,274.8 1260.8,270.2 1260.8,266.0 1261.1,262.0 1261.6,258.3 1262.3,254.8 1263.2,251.7 1264.3,248.8 1265.6,246.1 1267.1,243.7 1268.8,241.5 1270.6,239.6 1272.6,237.9 1274.7,236.4 1276.9,235.1 1279.3,234.0 1281.7,233.1 1284.3,232.3 1286.9,231.7 1289.6,231.2 1292.4,230.8 1295.3,230.5 1298.2,230.2 1301.2,230.0 1304.2,229.9 1307.2,229.8 1310.3,229.7 1313.4,229.7 1316.4,229.7 1319.5,229.7 1322.6,229.8 1325.7,229.8 1328.8,229.9 1331.9,230.0 1335.1,230.1 1338.3,230.3 1341.6,230.5 1344.9,230.7 1348.2,230.9 1351.6,231.1 1355.1,231.4 1358.6,231.6 1362.2,231.9 1365.8,232.2 1369.5,232.5 1373.3,232.9 1377.1,233.2 1381.0,233.6 1385.0,234.0 1389.1,234.4 1393.2,234.8 1397.4,235.3 1401.7,235.7 1406.1,236.2 1410.6,236.6 1415.2,237.1 1419.9,237.7 1424.7,238.2 1429.5,238.7 1434.5,239.3 1439.6,239.8 1444.7,240.4 1450.0,241.0 1455.4,241.6 1460.9,242.2 1466.5,242.9 1472.2,243.5 1478.1,244.2 1484.0,244.9 1490.1,245.5 1496.3,246.3 1502.5,247.0 1508.9,247.7 1515.5,248.5 1522.1,249.2 1528.8,250.0 1535.7,250.8 1542.6,251.6 1549.7,252.4 1556.8,253.2 1564.1,254.1 1571.5,254.9 1578.9,255.8 1586.4,256.6 1594.0,257.5 1601.7,258.4 1609.5,259.3 1617.3,260.2 1625.2,261.1 1633.1,262.0 1641.0,262.9 1649.0,263.8 1656.8,264.7 1664.6,265.6 1672.3,266.5 1679.9,267.4 1687.5,268.3 1695.1,269.1 1702.7,270.0 1710.2,270.9 1717.7,271.7 1725.1,272.6 1732.3,273.4 1739.4,274.2 1746.2,275.0 1753.0,275.8 1759.5,276.5 1766.0,277.3 1772.2,278.0 1778.4,278.7 1784.3,279.4 1790.1,280.1 1795.7,280.7 1801.2,281.3 1806.4,281.9 1811.5,282.5 1816.4,283.1 1821.1,283.6 1825.7,284.2 1830.1,284.7 1834.3,285.1 1838.5,285.6 1842.4,286.1 1846.2,286.5 1849.9,286.9 1853.5,287.3 1856.9,287.7 1860.3,288.1 1863.6,288.5 1866.8,288.9 1869.9,289.2 1872.9,289.6 1875.8,289.9 1878.7,290.2 1881.4,290.6 1884.0,290.9 1886.5,291.1 1889.0,291.4 1891.3,291.7 1893.6,292.0 1895.7,292.2 1897.8,292.4 1899.7,292.7 1901.5,292.9 1903.2,293.1 1904.8,293.3 1906.4,293.4 1907.8,293.6 1909.2,293.8 1910.5,293.9 1911.8,294.1 1913.0,294.2 1914.2,294.3 1915.3,294.5 1916.3,294.6 1917.2,294.7 1918.1,294.8 1919.0,294.9 1919.7,295.0 1920.4,295.0 1921.0,295.1 1921.6,295.2 1922.1,295.2 1922.7,295.3 1923.2,295.4 1923.8,295.4 1924.3,295.5 1924.7,295.5 1925.2,295.6 1925.6,295.7 1926.0,295.7 1926.4,295.7 1926.8,295.8 1927.2,295.8 1927.6,295.9 1928.0,295.9 1928.4,296.0 1928.8,296.0 1929.2,296.1 1929.6,296.1 1930.0,296.2 1930.3,296.2 1930.7,296.2 1930.9,296.3 1931.2,296.3 1931.4,296.3 1931.5,296.3 1931.7,296.3 1931.8,296.4 1931.9,296.4 1932.0,296.4 1932.2,296.4 1932.2,296.4 1932.3,296.4 1932.4,296.4 1932.5,296.4 1932.5,296.4 1932.5,296.4Z M1795.4,280.6 1365.8,237.3 1448.8,586.3Z" fill="#000" fill-opacity="0.39" fill-rule="evenodd" clip-path="url(#cpPlot)"/>
<rect x="1259.3" y="218.6" width="649.7" height="499.4" fill="none" stroke="#9a9a9a" stroke-width="1.6"/>
<rect x="1358.6" y="228.8" width="14.2" height="14.2" fill="none" stroke="#fff" stroke-width="1.5"/>
<rect x="1373.0" y="239.6" width="14.2" height="14.2" fill="none" stroke="#fff" stroke-width="1.5"/>
<rect x="1388.1" y="253.7" width="14.2" height="14.2" fill="none" stroke="#fff" stroke-width="1.5"/>
<rect x="1408.7" y="271.7" width="14.2" height="14.2" fill="none" stroke="#fff" stroke-width="1.5"/>
<rect x="1433.6" y="292.3" width="14.2" height="14.2" fill="none" stroke="#fff" stroke-width="1.5"/>
<rect x="1473.6" y="239.3" width="14.2" height="14.2" fill="none" stroke="#fff" stroke-width="1.5"/>
<rect x="1472.5" y="252.5" width="14.2" height="14.2" fill="none" stroke="#fff" stroke-width="1.5"/>
<rect x="1470.9" y="267.4" width="14.2" height="14.2" fill="none" stroke="#fff" stroke-width="1.5"/>
<rect x="1469.6" y="282.5" width="14.2" height="14.2" fill="none" stroke="#fff" stroke-width="1.5"/>
<rect x="1468.3" y="299.3" width="14.2" height="14.2" fill="none" stroke="#fff" stroke-width="1.5"/>
<rect x="1382.1" y="332.7" width="14.2" height="14.2" fill="none" stroke="#fff" stroke-width="1.5"/>
<rect x="1398.8" y="329.5" width="14.2" height="14.2" fill="none" stroke="#fff" stroke-width="1.5"/>
<rect x="1415.6" y="326.6" width="14.2" height="14.2" fill="none" stroke="#fff" stroke-width="1.5"/>
<rect x="1432.3" y="324.7" width="14.2" height="14.2" fill="none" stroke="#fff" stroke-width="1.5"/>
<rect x="1448.8" y="322.7" width="14.2" height="14.2" fill="none" stroke="#fff" stroke-width="1.5"/>
<rect x="1603.4" y="436.1" width="14.2" height="14.2" fill="none" stroke="#fff" stroke-width="1.5"/>
<rect x="1565.0" y="404.2" width="14.2" height="14.2" fill="none" stroke="#fff" stroke-width="1.5"/>
<rect x="1534.3" y="377.9" width="14.2" height="14.2" fill="none" stroke="#fff" stroke-width="1.5"/>
<rect x="1506.5" y="354.5" width="14.2" height="14.2" fill="none" stroke="#fff" stroke-width="1.5"/>
<rect x="1484.6" y="334.8" width="14.2" height="14.2" fill="none" stroke="#fff" stroke-width="1.5"/>
<rect x="1442.1" y="578.5" width="14.2" height="14.2" fill="none" stroke="#fff" stroke-width="1.5"/>
<rect x="1448.6" y="498.5" width="14.2" height="14.2" fill="none" stroke="#fff" stroke-width="1.5"/>
<rect x="1455.5" y="436.3" width="14.2" height="14.2" fill="none" stroke="#fff" stroke-width="1.5"/>
<rect x="1459.8" y="389.0" width="14.2" height="14.2" fill="none" stroke="#fff" stroke-width="1.5"/>
<rect x="1462.4" y="350.3" width="14.2" height="14.2" fill="none" stroke="#fff" stroke-width="1.5"/>
<rect x="1788.4" y="271.6" width="14.2" height="14.2" fill="none" stroke="#fff" stroke-width="1.5"/>
<rect x="1716.6" y="282.2" width="14.2" height="14.2" fill="none" stroke="#fff" stroke-width="1.5"/>
<rect x="1650.5" y="292.2" width="14.2" height="14.2" fill="none" stroke="#fff" stroke-width="1.5"/>
<rect x="1581.4" y="303.5" width="14.2" height="14.2" fill="none" stroke="#fff" stroke-width="1.5"/>
<rect x="1521.8" y="311.7" width="14.2" height="14.2" fill="none" stroke="#fff" stroke-width="1.5"/>
<circle cx="1365.9" cy="237.3" r="4.35" fill="rgb(0,196,0)" stroke="#161616" stroke-width="1.3"/>
<circle cx="1384.3" cy="249.3" r="4.35" fill="rgb(62,194,58)" stroke="#161616" stroke-width="1.3"/>
<circle cx="1401.7" cy="266.1" r="4.35" fill="rgb(88,194,88)" stroke="#161616" stroke-width="1.3"/>
<circle cx="1422.5" cy="283.1" r="4.35" fill="rgb(117,194,118)" stroke="#161616" stroke-width="1.3"/>
<circle cx="1444.9" cy="301.9" r="4.35" fill="rgb(150,194,150)" stroke="#161616" stroke-width="1.3"/>
<circle cx="1483.2" cy="248.1" r="4.35" fill="rgb(196,196,0)" stroke="#161616" stroke-width="1.3"/>
<circle cx="1481.7" cy="260.6" r="4.35" fill="rgb(194,193,75)" stroke="#161616" stroke-width="1.3"/>
<circle cx="1480.5" cy="274.5" r="4.35" fill="rgb(194,194,110)" stroke="#161616" stroke-width="1.3"/>
<circle cx="1478.0" cy="289.8" r="4.35" fill="rgb(194,193,137)" stroke="#161616" stroke-width="1.3"/>
<circle cx="1476.5" cy="306.4" r="4.35" fill="rgb(194,193,163)" stroke="#161616" stroke-width="1.3"/>
<circle cx="1388.0" cy="339.3" r="4.35" fill="rgb(0,196,196)" stroke="#161616" stroke-width="1.3"/>
<circle cx="1405.9" cy="336.6" r="4.35" fill="rgb(83,194,194)" stroke="#161616" stroke-width="1.3"/>
<circle cx="1422.4" cy="334.0" r="4.35" fill="rgb(119,194,193)" stroke="#161616" stroke-width="1.3"/>
<circle cx="1438.9" cy="330.9" r="4.35" fill="rgb(146,193,194)" stroke="#161616" stroke-width="1.3"/>
<circle cx="1455.3" cy="328.1" r="4.35" fill="rgb(170,193,194)" stroke="#161616" stroke-width="1.3"/>
<circle cx="1609.4" cy="440.6" r="4.35" fill="rgb(196,0,196)" stroke="#161616" stroke-width="1.3"/>
<circle cx="1571.6" cy="410.1" r="4.35" fill="rgb(193,80,194)" stroke="#161616" stroke-width="1.3"/>
<circle cx="1541.8" cy="383.6" r="4.35" fill="rgb(194,113,194)" stroke="#161616" stroke-width="1.3"/>
<circle cx="1517.7" cy="364.0" r="4.35" fill="rgb(193,142,194)" stroke="#161616" stroke-width="1.3"/>
<circle cx="1494.4" cy="343.8" r="4.35" fill="rgb(194,169,193)" stroke="#161616" stroke-width="1.3"/>
<circle cx="1441.9" cy="591.1" r="4.35" fill="rgb(8,8,176)" stroke="#161616" stroke-width="1.3"/>
<circle cx="1448.8" cy="509.7" r="4.35" fill="rgb(66,66,194)" stroke="#161616" stroke-width="1.3"/>
<circle cx="1457.0" cy="447.3" r="4.35" fill="rgb(98,98,194)" stroke="#161616" stroke-width="1.3"/>
<circle cx="1463.0" cy="398.6" r="4.35" fill="rgb(127,126,194)" stroke="#161616" stroke-width="1.3"/>
<circle cx="1468.1" cy="360.2" r="4.35" fill="rgb(157,158,194)" stroke="#161616" stroke-width="1.3"/>
<circle cx="1790.0" cy="278.3" r="4.35" fill="rgb(196,0,0)" stroke="#161616" stroke-width="1.3"/>
<circle cx="1730.7" cy="286.7" r="4.35" fill="rgb(194,52,52)" stroke="#161616" stroke-width="1.3"/>
<circle cx="1665.4" cy="296.6" r="4.35" fill="rgb(194,77,77)" stroke="#161616" stroke-width="1.3"/>
<circle cx="1603.7" cy="306.2" r="4.35" fill="rgb(194,106,107)" stroke="#161616" stroke-width="1.3"/>
<circle cx="1535.8" cy="317.6" r="4.35" fill="rgb(194,140,141)" stroke="#161616" stroke-width="1.3"/>
<rect x="1465.4" y="319.9" width="14" height="14" fill="none" stroke="#000" stroke-width="1.7"/>
<circle cx="1473.5" cy="325.8" r="4.35" fill="#fff" stroke="#333" stroke-width="1.2"/>
<circle cx="1486.2" cy="322.8" r="4.6" fill="#000"/>
<rect x="1685.3" y="562" width="218.6" height="149.4" fill="#2c2c2c"/>
<g clip-path="url(#cpIn)"><rect x="1687.3" y="564" width="214.6" height="145.4" fill="url(#gIn)"/>
<path d="M1687.3,564 H1901.9 V700.3 L1687.3,571.7Z" fill="#000" fill-opacity="0.39"/>
<path d="M1794.4,564 H1901.9 V636Z" fill="#232323"/></g>
<rect x="1687.3" y="564" width="214.6" height="145.4" fill="none" stroke="#a0a0a0" stroke-width="1.5"/>
<rect x="1787.3" y="628.5" width="14.2" height="14.2" fill="none" stroke="#fff" stroke-width="1.5"/>
<circle cx="1798.2" cy="656.7" r="4.35" fill="#c4c01a" stroke="#161616" stroke-width="1.3"/>
</svg>
</body></html>
